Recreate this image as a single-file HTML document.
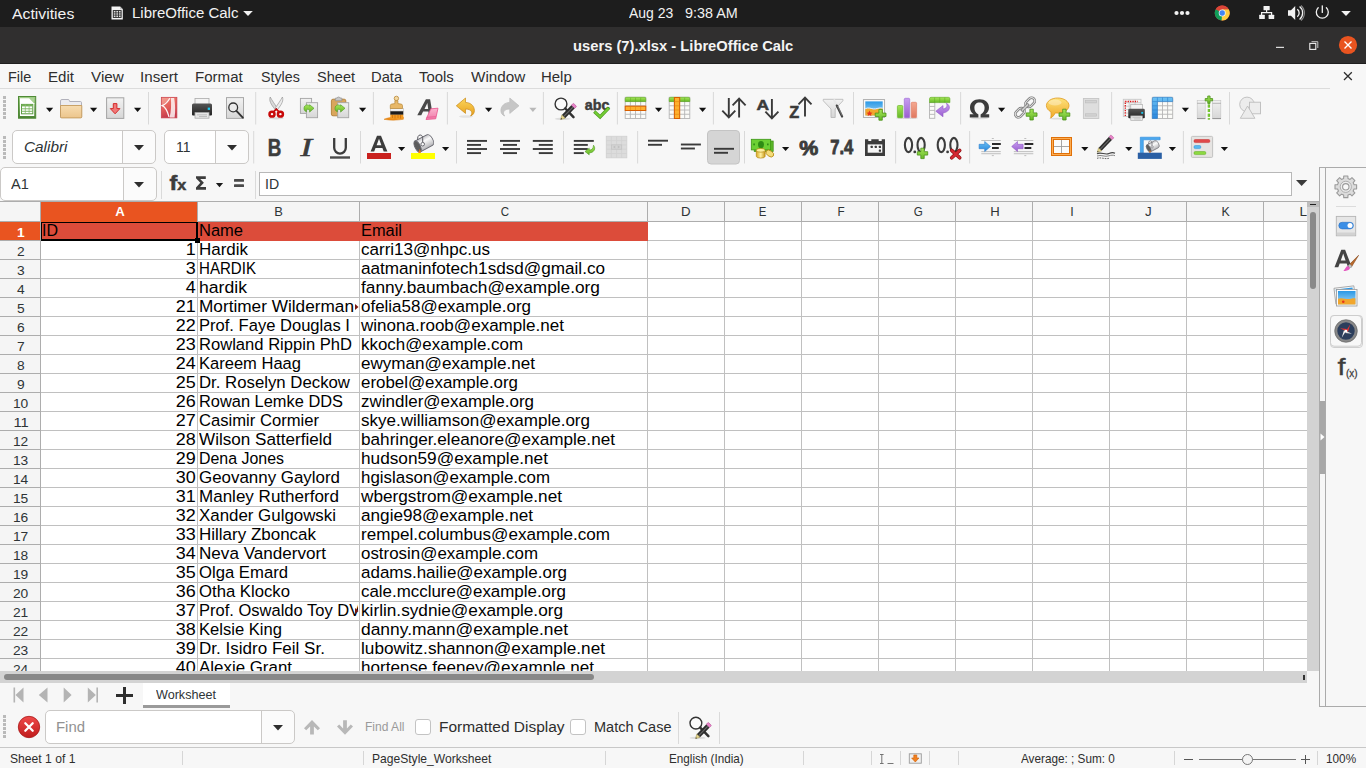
<!DOCTYPE html>
<html><head><meta charset="utf-8"><title>users (7).xlsx - LibreOffice Calc</title>
<style>
html,body{margin:0;padding:0}
body{width:1366px;height:768px;position:relative;overflow:hidden;background:#f7f7f7;font-family:"Liberation Sans",sans-serif;}
body>div,body>svg,body>span{position:absolute;}
.t{white-space:pre;display:block;position:absolute;}

</style></head><body>
<div style="left:0px;top:0px;width:1366px;height:27px;background:#1d1d1d;"></div>
<span class="t" style="left:12.00px;top:4.61px;font-size:15.20px;line-height:18.24px;color:#f2f2f2;transform:scaleX(1.0394);transform-origin:0 0;">Activities</span>
<span class="t" style="left:131.70px;top:4.90px;font-size:14.90px;line-height:17.88px;color:#f2f2f2;transform:scaleX(1.0071);transform-origin:0 0;">LibreOffice Calc</span>
<span class="t" style="left:629.20px;top:4.90px;font-size:14.90px;line-height:17.88px;color:#f2f2f2;transform:scaleX(0.9385);transform-origin:0 0;">Aug 23</span>
<span class="t" style="left:684.50px;top:4.90px;font-size:14.90px;line-height:17.88px;color:#f2f2f2;transform:scaleX(0.9645);transform-origin:0 0;">9:38 AM</span>
<div style="left:0px;top:27px;width:1366px;height:37px;background:#302f2f;"></div>
<div style="left:0px;top:63px;width:1366px;height:1px;background:#1f1f1f;"></div>
<span class="t" style="left:573.00px;top:37.62px;font-size:14.67px;line-height:17.6px;color:#f4f4f4;transform:scaleX(1.0054);transform-origin:0 0;font-weight:700;">users (7).xlsx - LibreOffice Calc</span>
<div style="left:0px;top:64px;width:1366px;height:704px;background:#f7f7f7;"></div>
<div style="left:0px;top:88px;width:1330px;height:1px;background:#dcdcdc;"></div>
<span class="t" style="left:8.40px;top:69.12px;font-size:14.67px;line-height:17.6px;color:#2e2e2e;transform:scaleX(0.9821);transform-origin:0 0;">File</span>
<span class="t" style="left:48.00px;top:69.12px;font-size:14.67px;line-height:17.6px;color:#2e2e2e;transform:scaleX(1.0291);transform-origin:0 0;">Edit</span>
<span class="t" style="left:91.00px;top:69.12px;font-size:14.67px;line-height:17.6px;color:#2e2e2e;transform:scaleX(1.0412);transform-origin:0 0;">View</span>
<span class="t" style="left:140.00px;top:69.12px;font-size:14.67px;line-height:17.6px;color:#2e2e2e;transform:scaleX(1.0341);transform-origin:0 0;">Insert</span>
<span class="t" style="left:195.00px;top:69.12px;font-size:14.67px;line-height:17.6px;color:#2e2e2e;transform:scaleX(1.0289);transform-origin:0 0;">Format</span>
<span class="t" style="left:261.00px;top:69.12px;font-size:14.67px;line-height:17.6px;color:#2e2e2e;transform:scaleX(0.9726);transform-origin:0 0;">Styles</span>
<span class="t" style="left:317.00px;top:69.12px;font-size:14.67px;line-height:17.6px;color:#2e2e2e;transform:scaleX(0.9923);transform-origin:0 0;">Sheet</span>
<span class="t" style="left:371.00px;top:69.12px;font-size:14.67px;line-height:17.6px;color:#2e2e2e;transform:scaleX(1.0055);transform-origin:0 0;">Data</span>
<span class="t" style="left:419.00px;top:69.12px;font-size:14.67px;line-height:17.6px;color:#2e2e2e;transform:scaleX(1.0174);transform-origin:0 0;">Tools</span>
<span class="t" style="left:471.00px;top:69.12px;font-size:14.67px;line-height:17.6px;color:#2e2e2e;transform:scaleX(1.0417);transform-origin:0 0;">Window</span>
<span class="t" style="left:541.00px;top:69.12px;font-size:14.67px;line-height:17.6px;color:#2e2e2e;transform:scaleX(1.0192);transform-origin:0 0;">Help</span>
<svg style="left:0;top:88px" width="1366" height="80" viewBox="0 88 1366 80"><defs>
<linearGradient id="gGreen" x1="0" y1="0" x2="0" y2="1"><stop offset="0" stop-color="#a6e65a"/><stop offset="1" stop-color="#66b826"/></linearGradient>
<linearGradient id="gDoc" x1="0" y1="0" x2="0" y2="1"><stop offset="0" stop-color="#a2cf88"/><stop offset="1" stop-color="#4a8232"/></linearGradient>
<linearGradient id="gFold" x1="0" y1="0" x2="0" y2="1"><stop offset="0" stop-color="#f7dcb0"/><stop offset="1" stop-color="#ecc58c"/></linearGradient>
<linearGradient id="gGrey" x1="0" y1="0" x2="0" y2="1"><stop offset="0" stop-color="#f2f2f2"/><stop offset="1" stop-color="#d6d6d6"/></linearGradient>
<linearGradient id="gPdf" x1="0" y1="0" x2="0.300" y2="1"><stop offset="0" stop-color="#f0806c"/><stop offset="0.600" stop-color="#e05a58"/><stop offset="1" stop-color="#c43a4c"/></linearGradient>
<linearGradient id="gPrn" x1="0" y1="0" x2="0" y2="1"><stop offset="0" stop-color="#555"/><stop offset="1" stop-color="#222"/></linearGradient>
<linearGradient id="gUndo" x1="0" y1="0" x2="0" y2="1"><stop offset="0" stop-color="#fbd65a"/><stop offset="1" stop-color="#e8a020"/></linearGradient>
<linearGradient id="gBub" x1="0" y1="0" x2="0" y2="1"><stop offset="0" stop-color="#fde27a"/><stop offset="1" stop-color="#f0a828"/></linearGradient>
<linearGradient id="gSky" x1="0" y1="0" x2="0" y2="1"><stop offset="0" stop-color="#2a98e6"/><stop offset="1" stop-color="#a8daf6"/></linearGradient>
<linearGradient id="gPurp" x1="0" y1="0" x2="0" y2="1"><stop offset="0" stop-color="#c79cf0"/><stop offset="1" stop-color="#9a5fd0"/></linearGradient>
<linearGradient id="gBlue" x1="0" y1="0" x2="0" y2="1"><stop offset="0" stop-color="#6cc2f4"/><stop offset="1" stop-color="#2a86dc"/></linearGradient>
<linearGradient id="gSalm" x1="0" y1="0" x2="0" y2="1"><stop offset="0" stop-color="#f4a890"/><stop offset="1" stop-color="#e07860"/></linearGradient>
<linearGradient id="gGold" x1="0" y1="0" x2="1" y2="0"><stop offset="0" stop-color="#d8a820"/><stop offset="0.5" stop-color="#fff0a0"/><stop offset="1" stop-color="#c89818"/></linearGradient>
<linearGradient id="gPink" x1="0" y1="0" x2="0" y2="1"><stop offset="0" stop-color="#fbb4cf"/><stop offset="1" stop-color="#f07aa8"/></linearGradient>
<linearGradient id="gBucket" x1="0" y1="0" x2="0" y2="1"><stop offset="0" stop-color="#c4c4c8"/><stop offset="0.350" stop-color="#fbfbfb"/><stop offset="1" stop-color="#b4b4b8"/></linearGradient>
</defs><rect x="18.500" y="96.500" width="17.200" height="21.700" fill="url(#gDoc)" stroke="#4f8a36" stroke-width="1"/><path d="M20 98.300h9.300l4.900 4.900v12.900H20z" fill="#fff"/><path d="M29.300 98.300l4.900 4.900v-4.900z" fill="#b4d8a0" opacity="0.700"/><rect x="21.500" y="104.400" width="11.300" height="9.400" fill="#fff" stroke="#5c9c42" stroke-width="1"/><rect x="21.500" y="104.400" width="11.300" height="2" fill="#74b058"/><path d="M25.300 104.400v9.400M29.100 104.400v9.400" stroke="#8cc070" stroke-width="0.800"/><path d="M21.500 108.800h11.300M21.500 111.300h11.300" stroke="#74b058" stroke-width="0.900"/><path d="M46 107.8h7.2l-3.6 4.1z" fill="#111"/><path d="M60.5 117.5v-16.6q0-1.4 1.4-1.4h6.2q1 0 1.3 1l0.3 1h10.6q1.2 0 1.2 1.2v14.8z" fill="#ececf0" stroke="#a9a9b4" stroke-width="0.9"/><path d="M60.5 105.5h21.3v11.2q0 1.2-1.2 1.2h-18.9q-1.2 0-1.2-1.2z" fill="url(#gFold)" stroke="#c49a5c" stroke-width="0.9"/><path d="M90 107.8h7.2l-3.6 4.1z" fill="#111"/><rect x="106.6" y="97.8" width="17.2" height="20.6" fill="url(#gGrey)" stroke="#a4a4a4" stroke-width="1"/><path d="M113.3 103.6h3.6v5h3l-4.8 5.2l-4.8-5.2h3z" fill="#f07878" stroke="#d42a2a" stroke-width="1"/><path d="M134 107.8h7.2l-3.6 4.1z" fill="#111"/><rect x="148.0" y="92" width="1" height="32.5" fill="#d9d9d9"/><rect x="161.300" y="97.300" width="15.600" height="20.600" fill="url(#gPdf)" stroke="#c8404c" stroke-width="0.700"/><path d="M169.800 98.300c-2.300 4.300-5.300 6.400-7.600 7.300c3 1.300 5.200 5 6.800 11.300" fill="none" stroke="#fff" stroke-width="1.300" opacity="0.950"/><path d="M170.800 98c0.600 6 0.400 13.300-1.200 19.400h5c1-6 0.600-13.300-0.400-19.400z" fill="#fff" opacity="0.800"/><path d="M162 98h7.500c-2 3.800-4.700 6-7.500 7.200z" fill="#fff" opacity="0.220"/><g transform="translate(192,98) scale(1.0,1.0)"><rect x="3" y="0.4" width="14" height="7" fill="#f4f4f4" stroke="#aaa" stroke-width="0.8"/><path d="M1.5 5.6h17a1.5 1.5 0 0 1 1.5 1.5v9.4a1 1 0 0 1 -1 1h-18a1 1 0 0 1 -1 -1v-9.4a1.5 1.5 0 0 1 1.5 -1.5z" fill="url(#gPrn)"/><rect x="3" y="14.6" width="14" height="5.6" fill="#e6e6e6" stroke="#aaa" stroke-width="0.8"/><rect x="5" y="16.4" width="10" height="0.9" fill="#b8b8b8"/><rect x="7" y="18" width="8" height="0.9" fill="#b8b8b8"/><rect x="15.7" y="9.6" width="2.3" height="2.3" fill="#18c8f0"/></g><rect x="226.5" y="97.6" width="17" height="20.8" fill="url(#gGrey)" stroke="#a8a8a8" stroke-width="1"/><circle cx="233.2" cy="107.4" r="4.4" fill="#ececec" fill-opacity="0.8" stroke="#333" stroke-width="1.3"/><path d="M236.4 110.8l6.4 6.8" stroke="#333" stroke-width="1.9" stroke-linecap="round"/><rect x="255.2" y="92" width="1" height="32.5" fill="#d9d9d9"/><ellipse cx="276.200" cy="118.300" rx="7.500" ry="1.100" fill="#000" opacity="0.120"/><path d="M270.200 97c-1.300 3.400 0.300 7 5.300 13l1.700-2.200c-2.500-3.600-5.300-7.600-7-10.800z" fill="#d8d8d8" stroke="#8c8c8c" stroke-width="0.600"/><path d="M282.400 97c1.300 3.400-0.300 7-5.300 13l-1.700-2.200c2.500-3.600 5.300-7.600 7-10.800z" fill="#ececec" stroke="#8c8c8c" stroke-width="0.600"/><circle cx="276.300" cy="108.600" r="0.700" fill="#555"/><ellipse cx="272" cy="114.200" rx="2.500" ry="2.400" fill="none" stroke="#c80808" stroke-width="2.500"/><ellipse cx="280.400" cy="114.200" rx="2.500" ry="2.400" fill="none" stroke="#c80808" stroke-width="2.500"/><path d="M273.800 111.600l2.500-2.400l2.500 2.400" fill="none" stroke="#c80808" stroke-width="1.800"/><rect x="300.400" y="98.400" width="11.200" height="15" fill="url(#gGrey)" stroke="#a4a4a4" stroke-width="0.9"/><rect x="306.400" y="102.700" width="11.200" height="15" fill="url(#gGrey)" stroke="#a4a4a4" stroke-width="0.9"/><path d="M304.0 108.2c0.3-3.6 4-4.2 5.600-2.100v-1.400l4.400 3.600l-4.400 3.800v-1.900c-1.600-1.400-3.600-1.300-3.200 1.600c-1.500-0.600-2.500-2-2.400-3.600z" fill="url(#gGreen)" stroke="#4a9a1c" stroke-width="0.600"/><rect x="331.400" y="99.200" width="14.400" height="16.600" rx="1.600" fill="#d9a65c" stroke="#b07e38" stroke-width="0.9"/><path d="M335.300 100.800v-2.200q0-0.600 0.600-0.600h1.300q0.300-1 1.400-1t1.400 1h1.300q0.600 0 0.600 0.600v2.200z" fill="#c8c8c8" stroke="#8c8c8c" stroke-width="0.700"/><rect x="337.700" y="102.700" width="11" height="15" fill="url(#gGrey)" stroke="#a4a4a4" stroke-width="0.9"/><path d="M335.0 108.2c0.3-3.6 4-4.2 5.600-2.100v-1.400l4.400 3.600l-4.400 3.800v-1.900c-1.600-1.400-3.600-1.300-3.200 1.600c-1.500-0.600-2.500-2-2.400-3.600z" fill="url(#gGreen)" stroke="#4a9a1c" stroke-width="0.600"/><path d="M359 107.8h7.2l-3.6 4.1z" fill="#111"/><rect x="372.9" y="92" width="1" height="32.5" fill="#d9d9d9"/><path d="M384 119.300c4-1.800 7-1.500 8-2.300h11.300v2.300c-6 1-13 1.200-19.300 0z" fill="#f0901c" stroke="#d87808" stroke-width="0.500"/><rect x="390.300" y="114.300" width="13" height="4.500" fill="#f29a22"/><path d="M392.500 115v3M395 115v3.500M398 115v3M400.500 115v3.500" stroke="#c86c08" stroke-width="0.700"/><rect x="390.300" y="111" width="13" height="3.600" fill="#1c1c1c"/><rect x="390.300" y="108.400" width="13" height="2.700" fill="#f4f4f4" stroke="#999" stroke-width="0.400"/><path d="M390.300 108.500v-2.800q0-1.400 1.400-1.600l3.200-0.500v-3h3v3l3.200 0.500q1.400 0.200 1.400 1.600v2.800z" fill="#e8b868" stroke="#b88838" stroke-width="0.700"/><circle cx="396.400" cy="98.400" r="2.200" fill="#f4d8a0" stroke="#b88838" stroke-width="0.800"/><path d="M417.300 115.200l8.600-16h4.200l2.700 16h-3.900l-0.500-3.600h-5.300l-1.800 3.600zm7.200-6.300h3.700l-0.800-5.800z" fill="#4a4a4a"/><path d="M430.800 108.800l7.200-0.600l-2.300 10.600l-9.700 0.700z" fill="url(#gPink)" stroke="#e8508c" stroke-width="0.800"/><path d="M426.400 117.300l9.400-0.600" stroke="#e8508c" stroke-width="0.700"/><rect x="446.9" y="92" width="1" height="32.5" fill="#d9d9d9"/><ellipse cx="466" cy="116.500" rx="7" ry="1.300" fill="#000" opacity="0.080"/><path transform="translate(456,98)" d="M0.300 7.800L9.500 0v4.400c5 0.200 8.700 3.200 8.900 8c0.100 2.600-1.400 4.600-3.800 5.600c1.200-1.500 1.600-3.200 0.700-4.700c-1-1.600-3-2.300-5.800-2.200v4.300z" fill="url(#gUndo)" stroke="#c88a18" stroke-width="0.700" stroke-linejoin="round"/><path d="M485 107.8h7.2l-3.6 4.1z" fill="#111"/><path transform="translate(519.3,98) scale(-1,1)" d="M0.300 7.800L9.500 0v4.400c5 0.200 8.700 3.200 8.900 8c0.100 2.600-1.400 4.600-3.800 5.600c1.200-1.500 1.600-3.200 0.700-4.700c-1-1.600-3-2.300-5.800-2.200v4.300z" fill="#c6c6c6" stroke="#bcbcbc" stroke-width="0.700" stroke-linejoin="round"/><path d="M529.3 107.8h7.2l-3.6 4.1z" fill="#b9b9b9"/><rect x="542.9" y="92" width="1" height="32.5" fill="#d9d9d9"/><g transform="translate(553.7,97.5)"><ellipse cx="9" cy="21.300" rx="8" ry="1.300" fill="#000" opacity="0.100"/><circle cx="7.300" cy="6.500" r="5.900" fill="#fdfdfd" fill-opacity="0.600" stroke="#333" stroke-width="1.400"/><path d="M11.600 11l8.200 8.600" stroke="#333" stroke-width="2.500" stroke-linecap="round"/><g transform="translate(21.3,7.3) rotate(134.21)"><rect x="0" y="-2.3" width="3" height="4.6" rx="0.8" fill="#e884c8" stroke="#b04890" stroke-width="0.5"/><rect x="3" y="-2.3" width="13.51" height="4.6" fill="#2c2c2c"/><rect x="3" y="-0.69" width="13.51" height="1.15" fill="#666"/><path d="M16.51 -2.3L20.51 0L16.51 2.3z" fill="#e8d890" stroke="#8a7a30" stroke-width="0.4"/><path d="M19.21 -0.76L20.51 0L19.21 0.76z" fill="#222"/></g></g><text x="584.800" y="110" font-family="Liberation Sans, sans-serif" font-weight="700" font-size="14.500" textLength="24.500" lengthAdjust="spacingAndGlyphs" fill="#3c3c3c" stroke="#3c3c3c" stroke-width="0.500">abc</text><path d="M595.500 112.600l4.600 4.300l7.800-8" fill="none" stroke="#4a9a1c" stroke-width="3.300" stroke-linecap="square"/><path d="M595.500 112.600l4.600 4.300l7.800-8" fill="none" stroke="#74cc34" stroke-width="2.100" stroke-linecap="square"/><rect x="616.9" y="92" width="1" height="32.5" fill="#d9d9d9"/><rect x="625.2" y="97.3" width="20.59999999999991" height="21.200000000000003" fill="#fbfbf8" stroke="#b4b4b4" stroke-width="0.9"/><path d="M630.35 97.3V118.5" stroke="#b4b4b4" stroke-width="0.9"/><path d="M635.50 97.3V118.5" stroke="#b4b4b4" stroke-width="0.9"/><path d="M640.65 97.3V118.5" stroke="#b4b4b4" stroke-width="0.9"/><path d="M625.2 101.54H645.8" stroke="#b4b4b4" stroke-width="0.9"/><path d="M625.2 105.78H645.8" stroke="#b4b4b4" stroke-width="0.9"/><path d="M625.2 110.02H645.8" stroke="#b4b4b4" stroke-width="0.9"/><path d="M625.2 114.26H645.8" stroke="#b4b4b4" stroke-width="0.9"/><path d="M625.2 101.54v-2.74q0-1.500 1.500-1.500h17.59999999999991q1.500 0 1.500 1.500v2.74z" fill="url(#gGreen)" stroke="#5aa81e" stroke-width="0.600"/><path d="M630.35 97.8v3.74" stroke="#5aa81e" stroke-width="0.700" opacity="0.700"/><path d="M635.50 97.8v3.74" stroke="#5aa81e" stroke-width="0.700" opacity="0.700"/><path d="M640.65 97.8v3.74" stroke="#5aa81e" stroke-width="0.700" opacity="0.700"/><rect x="625.200" y="106.200" width="20.600" height="4.300" fill="#ffb02e" stroke="#d85e00" stroke-width="1"/><path d="M630.350 106.500v3.700M635.500 106.500v3.700M640.650 106.500v3.700" stroke="#e88a10" stroke-width="0.700"/><path d="M655 107.8h7.2l-3.6 4.1z" fill="#111"/><rect x="669.2" y="97.3" width="20.59999999999991" height="21.200000000000003" fill="#fbfbf8" stroke="#b4b4b4" stroke-width="0.9"/><path d="M674.35 97.3V118.5" stroke="#b4b4b4" stroke-width="0.9"/><path d="M679.50 97.3V118.5" stroke="#b4b4b4" stroke-width="0.9"/><path d="M684.65 97.3V118.5" stroke="#b4b4b4" stroke-width="0.9"/><path d="M669.2 101.54H689.8" stroke="#b4b4b4" stroke-width="0.9"/><path d="M669.2 105.78H689.8" stroke="#b4b4b4" stroke-width="0.9"/><path d="M669.2 110.02H689.8" stroke="#b4b4b4" stroke-width="0.9"/><path d="M669.2 114.26H689.8" stroke="#b4b4b4" stroke-width="0.9"/><path d="M669.2 101.54v-2.74q0-1.500 1.500-1.500h17.59999999999991q1.500 0 1.500 1.500v2.74z" fill="url(#gGreen)" stroke="#5aa81e" stroke-width="0.600"/><path d="M674.35 97.8v3.74" stroke="#5aa81e" stroke-width="0.700" opacity="0.700"/><path d="M679.50 97.8v3.74" stroke="#5aa81e" stroke-width="0.700" opacity="0.700"/><path d="M684.65 97.8v3.74" stroke="#5aa81e" stroke-width="0.700" opacity="0.700"/><rect x="674.400" y="97.500" width="5.300" height="21" fill="#ffb02e" stroke="#d85e00" stroke-width="1"/><path d="M674.700 101.600h4.700M674.700 105.800h4.700M674.700 110h4.700M674.700 114.300h4.700" stroke="#e88a10" stroke-width="0.700"/><path d="M699 107.8h7.2l-3.6 4.1z" fill="#111"/><rect x="712.9" y="92" width="1" height="32.5" fill="#d9d9d9"/><path d="M728.800 98v19M722.300 110.700l6.500 6.600l6.500-6.600M739.100 117.500v-19M732.600 105.300l6.500-6.600l6.500 6.600" stroke="#3a3a3a" stroke-width="1.900" fill="none" stroke-linecap="butt"/><path d="M771.900 99v19M765.400 111.700l6.500 6.600l6.500-6.600" stroke="#3a3a3a" stroke-width="1.900" fill="none" stroke-linecap="butt"/><text x="756.600" y="109.500" font-family="Liberation Sans, sans-serif" font-weight="700" font-size="15" textLength="12.600" lengthAdjust="spacingAndGlyphs" fill="#3a3a3a" stroke="#3a3a3a" stroke-width="0.500">A</text><path d="M805 116.500v-19M798.500 104.300l6.500-6.600l6.500 6.600" stroke="#3a3a3a" stroke-width="1.900" fill="none" stroke-linecap="butt"/><text x="789.300" y="117.700" font-family="Liberation Sans, sans-serif" font-weight="700" font-size="15.600" textLength="10" lengthAdjust="spacingAndGlyphs" fill="#3a3a3a" stroke="#3a3a3a" stroke-width="0.500">Z</text><path d="M823.300 99.300h19.600v1.500l-7.700 8.200v8.500h-4.200v-8.500l-7.700-8.200z" fill="url(#gGrey)" stroke="#b4b4b4" stroke-width="0.800"/><path d="M833.800 99.500l3.400 6.800" stroke="#e8e8e8" stroke-width="2.200"/><path d="M836.800 105.600l5.300 11" stroke="#444" stroke-width="2.200" stroke-linecap="round"/><path d="M837.600 106l4.600 9.600" stroke="#999" stroke-width="0.600"/><rect x="853.0" y="92" width="1" height="32.5" fill="#d9d9d9"/><rect x="863.400" y="99.600" width="21.200" height="17.800" fill="#fafafa" stroke="#a8a8a8" stroke-width="0.900"/><rect x="865.300" y="101.400" width="17.400" height="14.200" fill="url(#gSky)"/><path d="M865.300 109c3-1.500 5-0.300 8 0.200s6-1.800 9.400-0.700v7.100h-17.400z" fill="#f2a62c"/><path d="M865.300 108.700c3-1.500 5-0.300 8 0.200s6-1.800 9.400-0.700" stroke="#fff" stroke-width="0.900" fill="none" opacity="0.900"/><path d="M869.500 110.500l1 1.900l2 0.300l-1.500 1.400l0.400 2l-1.900-1l-1.800 1l0.300-2l-1.400-1.400l2-0.300z" fill="#e8341c"/><path d="M878.9 109.39999999999999h3.4v3.7h3.7v3.4h-3.7v3.7h-3.4v-3.7h-3.7v-3.4h3.7z" fill="url(#gGreen)" stroke="#4a9018" stroke-width="0.8"/><ellipse cx="907" cy="118" rx="11" ry="1" fill="#000" opacity="0.120"/><rect x="897.400" y="105.500" width="5.400" height="12.200" rx="1" fill="url(#gGreen)" stroke="#6cb82c" stroke-width="0.700"/><rect x="904.300" y="98.300" width="5.400" height="19.400" rx="1" fill="url(#gPurp)" stroke="#a070d8" stroke-width="0.700"/><rect x="911.200" y="102.300" width="5.400" height="15.400" rx="1" fill="url(#gSalm)" stroke="#e08068" stroke-width="0.700"/><rect x="929.5" y="102.5" width="5.2999999999999545" height="15.799999999999997" fill="#fbfbf8" stroke="#b4b4b4" stroke-width="0.9"/><path d="M929.5 106.45H934.8" stroke="#b4b4b4" stroke-width="0.9"/><path d="M929.5 110.40H934.8" stroke="#b4b4b4" stroke-width="0.9"/><path d="M929.5 114.35H934.8" stroke="#b4b4b4" stroke-width="0.9"/><path d="M929.500 102.600v-3.800q0-1.500 1.500-1.500h17.400q1.500 0 1.500 1.500v3.800z" fill="url(#gGreen)" stroke="#5aa81e" stroke-width="0.600"/><path d="M934.600 97.500v5M939.700 97.500v5M944.800 97.500v5" stroke="#5aa81e" stroke-width="0.700" opacity="0.700"/><path d="M946.300 103.300c4.800 2 4.300 8.600-3.300 9.700v3.800l-7.200-5.600l7.200-5.600v3.400c3.300-0.400 5-2.600 3.300-5.700z" fill="url(#gPurp)" stroke="#9058c8" stroke-width="0.600"/><rect x="960.1" y="92" width="1" height="32.5" fill="#d9d9d9"/><ellipse cx="979.500" cy="118.300" rx="9" ry="0.900" fill="#000" opacity="0.100"/><path d="M969.800 117.600v-3.300h3.900c-2.500-1.700-3.700-4-3.700-6.800c0-5 3.800-8.200 9.500-8.200s9.500 3.200 9.500 8.200c0 2.800-1.200 5.100-3.700 6.800h3.900v3.300h-8.600v-3.100c2.600-1.200 4-3.600 4-6.700c0-3.400-1.900-5.400-5.100-5.400s-5.100 2-5.100 5.400c0 3.100 1.400 5.500 4 6.700v3.100z" fill="#3c3c3c"/><path d="M998 107.8h7.2l-3.6 4.1z" fill="#111"/><g transform="translate(1025,107.500) rotate(-45)"><rect x="-12.500" y="-3.200" width="10.500" height="6.400" rx="3.200" fill="none" stroke="#6e6e6e" stroke-width="2.600"/><rect x="-12.500" y="-3.200" width="10.500" height="6.400" rx="3.200" fill="none" stroke="#dcdcdc" stroke-width="1.200"/><rect x="2" y="-3.200" width="10.500" height="6.400" rx="3.200" fill="none" stroke="#6e6e6e" stroke-width="2.600"/><rect x="2" y="-3.200" width="10.500" height="6.400" rx="3.200" fill="none" stroke="#dcdcdc" stroke-width="1.200"/><rect x="-5" y="-1.300" width="10" height="2.600" rx="1.300" fill="#c8c8c8" stroke="#6e6e6e" stroke-width="0.800"/></g><path d="M1029.8999999999999 109.19999999999999h3.4v3.7h3.7v3.4h-3.7v3.7h-3.4v-3.7h-3.7v-3.4h3.7z" fill="url(#gGreen)" stroke="#4a9018" stroke-width="0.8"/><ellipse cx="1057" cy="118.600" rx="8" ry="0.900" fill="#000" opacity="0.100"/><path d="M1057.700 98c6.300 0 11.300 3.400 11.300 7.600s-5 7.500-11.300 7.500c-0.800 0-1.600-0.100-2.400-0.200c-1 2-2.600 4-4.600 5.200c0.500-2 0.600-4.200 0.200-6.300c-2.800-1.400-4.500-3.700-4.500-6.200c0-4.200 5-7.600 11.300-7.600z" fill="url(#gBub)" stroke="#e09a20" stroke-width="0.800"/><ellipse cx="1055" cy="102.500" rx="6.500" ry="3" fill="#fff" opacity="0.350"/><path d="M1062.7 109.19999999999999h3.4v3.7h3.7v3.4h-3.7v3.7h-3.4v-3.7h-3.7v-3.4h3.7z" fill="url(#gGreen)" stroke="#4a9018" stroke-width="0.8"/><rect x="1083.400" y="98.500" width="15.400" height="20" fill="#dedede" stroke="#c6c6c6" stroke-width="0.900"/><rect x="1085.600" y="100.600" width="11" height="2.300" fill="#d2d2d2" stroke="#bcbcbc" stroke-width="0.600"/><rect x="1085.600" y="113.800" width="11" height="2.300" fill="#d2d2d2" stroke="#bcbcbc" stroke-width="0.600"/><rect x="1111.1" y="92" width="1" height="32.5" fill="#d9d9d9"/><rect x="1123.3" y="99.3" width="17.700000000000045" height="17.200000000000003" fill="#f6f6f6" stroke="#c8c8c8" stroke-width="0.9"/><path d="M1129.20 99.3V116.5" stroke="#c8c8c8" stroke-width="0.9"/><path d="M1135.10 99.3V116.5" stroke="#c8c8c8" stroke-width="0.9"/><path d="M1123.3 102.74H1141" stroke="#c8c8c8" stroke-width="0.9"/><path d="M1123.3 106.18H1141" stroke="#c8c8c8" stroke-width="0.9"/><path d="M1123.3 109.62H1141" stroke="#c8c8c8" stroke-width="0.9"/><path d="M1123.3 113.06H1141" stroke="#c8c8c8" stroke-width="0.9"/><path d="M1125.300 116v-14.500h12.500" fill="none" stroke="#e01818" stroke-width="1.300" stroke-dasharray="1.300 1.100"/><g transform="translate(1128.3,104.3) scale(0.825,0.7951219512195122)"><rect x="3" y="0.4" width="14" height="7" fill="#f4f4f4" stroke="#aaa" stroke-width="0.8"/><path d="M1.5 5.6h17a1.5 1.5 0 0 1 1.5 1.5v9.4a1 1 0 0 1 -1 1h-18a1 1 0 0 1 -1 -1v-9.4a1.5 1.5 0 0 1 1.5 -1.5z" fill="url(#gPrn)"/><rect x="3" y="14.6" width="14" height="5.6" fill="#e6e6e6" stroke="#aaa" stroke-width="0.8"/><rect x="5" y="16.4" width="10" height="0.9" fill="#b8b8b8"/><rect x="7" y="18" width="8" height="0.9" fill="#b8b8b8"/><rect x="15.7" y="9.6" width="2.3" height="2.3" fill="#18c8f0"/></g><rect x="1152.3" y="97.3" width="20.40000000000009" height="21.200000000000003" fill="#fbfbf8" stroke="#b4b4b4" stroke-width="0.9"/><path d="M1157.40 97.3V118.5" stroke="#b4b4b4" stroke-width="0.9"/><path d="M1162.50 97.3V118.5" stroke="#b4b4b4" stroke-width="0.9"/><path d="M1167.60 97.3V118.5" stroke="#b4b4b4" stroke-width="0.9"/><path d="M1152.3 101.54H1172.7" stroke="#b4b4b4" stroke-width="0.9"/><path d="M1152.3 105.78H1172.7" stroke="#b4b4b4" stroke-width="0.9"/><path d="M1152.3 110.02H1172.7" stroke="#b4b4b4" stroke-width="0.9"/><path d="M1152.3 114.26H1172.7" stroke="#b4b4b4" stroke-width="0.9"/><path d="M1152.300 118.500v-19.700q0-1.500 1.500-1.500h17.400q1.500 0 1.500 1.500v2.800h-15.300v16.900z" fill="url(#gBlue)" stroke="#2a7ccc" stroke-width="0.600"/><path d="M1157.400 97.500v4M1162.500 97.500v4M1167.600 97.500v4M1152.500 101.600h5M1152.500 105.800h5M1152.500 110h5M1152.500 114.300h5" stroke="#2a7ccc" stroke-width="0.700" opacity="0.800"/><path d="M1181.8 107.8h7.2l-3.6 4.1z" fill="#111"/><rect x="1197.200" y="100.500" width="8" height="18" fill="url(#gGrey)" stroke="#c4c4c4" stroke-width="0.600"/><rect x="1212.600" y="100.500" width="8.200" height="18" fill="url(#gGrey)" stroke="#c4c4c4" stroke-width="0.600"/><path d="M1197 103.300h8.400M1212.400 103.300h8.600" stroke="#b0b0b0" stroke-width="0.900"/><path d="M1197 118.600h8.400M1212.400 118.600h8.600" stroke="#8a8a8a" stroke-width="0.900"/><path d="M1208.900 104.500v15" stroke="#5aa81e" stroke-width="2.300" stroke-dasharray="3 1.600"/><path d="M1208.900 104.500v15" stroke="#86d83a" stroke-width="1.200" stroke-dasharray="3 1.600"/><path d="M1207.75 96.0h2.3v2.5500000000000003h2.5500000000000003v2.3h-2.5500000000000003v2.5500000000000003h-2.3v-2.5500000000000003h-2.5500000000000003v-2.3h2.5500000000000003z" fill="url(#gGreen)" stroke="#4a9018" stroke-width="0.8"/><rect x="1229.0" y="92" width="1" height="32.5" fill="#d9d9d9"/><circle cx="1247" cy="104.400" r="7.300" fill="#ececec" stroke="#bcbcbc" stroke-width="0.900"/><rect x="1249.500" y="102.200" width="11" height="11.600" fill="#ededed" stroke="#bcbcbc" stroke-width="0.900"/><path d="M1240.300 118.300l7.300-12.300l7.300 12.300z" fill="#ececec" stroke="#bcbcbc" stroke-width="0.900"/><rect x="253.2" y="131" width="1" height="32.5" fill="#d9d9d9"/><text x="267.800" y="155.800" font-family="Liberation Sans, sans-serif" font-weight="700" font-size="23" textLength="13.600" lengthAdjust="spacingAndGlyphs" fill="#3c3c3c" stroke="#3c3c3c" stroke-width="0.500">B</text><text x="300.500" y="155.800" font-family="Liberation Serif, serif" font-style="italic" font-weight="400" font-size="24.500" textLength="11.500" stroke="#3c3c3c" stroke-width="0.600" lengthAdjust="spacingAndGlyphs" fill="#3c3c3c">I</text><path d="M334.200 138v9.800a5.800 5.800 0 0 0 11.600 0v-9.800" fill="none" stroke="#3c3c3c" stroke-width="2.300"/><rect x="330" y="156.300" width="20" height="2.400" fill="#4a4a4a"/><rect x="360.0" y="131" width="1" height="32.5" fill="#d9d9d9"/><path d="M370.600 151.600l6.400-15.800h4l6.400 15.800h-3.700l-1.300-3.500h-6.900l-1.300 3.500zm6-6.300h4.800l-2.400-6.500z" fill="#3c3c3c"/><rect x="367" y="153" width="24" height="6" fill="#c9211e"/><path d="M398 147h7.2l-3.6 4.1z" fill="#111"/><g transform="translate(423.6,143.3) scale(1.0)"><g transform="rotate(-28)"><path d="M-6.800 -6H6.800A3.200 6 0 0 1 6.800 6H-6.800z" fill="url(#gBucket)" stroke="#66666e" stroke-width="0.900"/><ellipse cx="-6.800" cy="0" rx="2.700" ry="6" fill="#5c5c5c" stroke="#66666e" stroke-width="0.900"/></g><path d="M-5.900 -3.200C-6.200 -6 -5.500 -8.300 -3.400 -8.300C-1.400 -8.300 -0.900 -6.500 -0.900 -4.500V-1" fill="none" stroke="#5a5a62" stroke-width="1"/><circle cx="-0.900" cy="0.900" r="1.800" fill="#fafafa" stroke="#5a5a62" stroke-width="0.900"/><path d="M-5.400 9.800c0.300-2 1.400-2.600 1.300-4.200c1.100 1.300 1.600 2.800 1 4.200z" fill="#f07818"/></g><rect x="411" y="153" width="24" height="6" fill="#ffff00"/><path d="M442 147h7.2l-3.6 4.1z" fill="#111"/><rect x="456.0" y="131" width="1" height="32.5" fill="#d9d9d9"/><rect x="467.00" y="139.95" width="20" height="1.9" fill="#3a3a3a"/><rect x="467.00" y="143.95" width="14" height="1.9" fill="#3a3a3a"/><rect x="467.00" y="148.05" width="20" height="1.9" fill="#3a3a3a"/><rect x="467.00" y="152.15" width="14" height="1.9" fill="#3a3a3a"/><rect x="500.00" y="139.95" width="20" height="1.9" fill="#3a3a3a"/><rect x="503.00" y="143.95" width="14" height="1.9" fill="#3a3a3a"/><rect x="500.00" y="148.05" width="20" height="1.9" fill="#3a3a3a"/><rect x="503.00" y="152.15" width="14" height="1.9" fill="#3a3a3a"/><rect x="532.80" y="139.95" width="20" height="1.9" fill="#3a3a3a"/><rect x="538.80" y="143.95" width="14" height="1.9" fill="#3a3a3a"/><rect x="532.80" y="148.05" width="20" height="1.9" fill="#3a3a3a"/><rect x="538.80" y="152.15" width="14" height="1.9" fill="#3a3a3a"/><rect x="563.0" y="131" width="1" height="32.5" fill="#d9d9d9"/><rect x="573.80" y="139.95" width="20" height="1.9" fill="#3a3a3a"/><rect x="573.80" y="143.95" width="14" height="1.9" fill="#3a3a3a"/><rect x="573.80" y="148.05" width="14" height="1.9" fill="#3a3a3a"/><rect x="573.80" y="152.15" width="10" height="1.9" fill="#3a3a3a"/><path d="M593.500 145.200c2.800 3.400 0.500 7.600-4.300 7.600v2l-4.200-3.300l4.200-3.300v1.900c2.600 0.200 4.300-1.800 4.300-4.900z" fill="url(#gGreen)" stroke="#4a9a1c" stroke-width="0.600"/><rect x="606.3" y="136.3" width="20.5" height="21.5" fill="#dcdcdc" stroke="#d2d2d2" stroke-width="0.9"/><path d="M611.42 136.3V157.8" stroke="#d2d2d2" stroke-width="0.9"/><path d="M616.55 136.3V157.8" stroke="#d2d2d2" stroke-width="0.9"/><path d="M621.67 136.3V157.8" stroke="#d2d2d2" stroke-width="0.9"/><path d="M606.3 140.60H626.8" stroke="#d2d2d2" stroke-width="0.9"/><path d="M606.3 144.90H626.8" stroke="#d2d2d2" stroke-width="0.9"/><path d="M606.3 149.20H626.8" stroke="#d2d2d2" stroke-width="0.9"/><path d="M606.3 153.50H626.8" stroke="#d2d2d2" stroke-width="0.9"/><rect x="611.400" y="144.900" width="10.300" height="4.300" fill="#d4d4d4" stroke="#c2c2c2" stroke-width="0.700"/><path d="M615.300 145.600l-2.400 1.500l2.400 1.500zM617.800 145.600l2.400 1.500l-2.400 1.500z" fill="#c0c0c0"/><rect x="637.1" y="131" width="1" height="32.5" fill="#d9d9d9"/><rect x="648.00" y="139.75" width="20" height="1.9" fill="#3a3a3a"/><rect x="648.00" y="143.85" width="14" height="1.9" fill="#3a3a3a"/><rect x="680.90" y="143.55" width="20" height="1.9" fill="#3a3a3a"/><rect x="680.90" y="147.55" width="14" height="1.9" fill="#3a3a3a"/><rect x="707.500" y="130.500" width="32" height="33.500" rx="3.500" fill="#d5d5d5" stroke="#c4c4c4" stroke-width="1"/><rect x="714.00" y="147.85" width="20" height="1.9" fill="#3a3a3a"/><rect x="714.00" y="151.85" width="14" height="1.9" fill="#3a3a3a"/><rect x="744.0" y="131" width="1" height="32.5" fill="#d9d9d9"/><rect x="754.200" y="141" width="19" height="10.600" fill="#5cb82a" stroke="#3c8c14" stroke-width="0.700"/><rect x="751.300" y="139.300" width="19.400" height="10.600" fill="#6cd034" stroke="#3c9414" stroke-width="0.800"/><ellipse cx="761" cy="144.600" rx="3" ry="3.600" fill="#2e8c14"/><rect x="753.300" y="143.500" width="1.600" height="1.800" fill="#2e8c14"/><rect x="767" y="143.500" width="1.600" height="1.800" fill="#2e8c14"/><ellipse cx="769.800" cy="153.500" rx="4.300" ry="2.800" transform="rotate(35 769.800 153.500)" fill="#f4dc78" stroke="#b88a14" stroke-width="0.800"/><path d="M756.300 150.300v6a4.400 1.800 0 0 0 8.800 0v-6z" fill="url(#gGold)" stroke="#b88a14" stroke-width="0.700"/><ellipse cx="760.700" cy="150.300" rx="4.400" ry="1.900" fill="#fbeea0" stroke="#b88a14" stroke-width="0.700"/><path d="M782 147h7.2l-3.6 4.1z" fill="#111"/><text x="799.300" y="154.600" font-family="Liberation Sans, sans-serif" font-weight="700" font-size="20.500" textLength="19" lengthAdjust="spacingAndGlyphs" fill="#3c3c3c" stroke="#3c3c3c" stroke-width="0.900">%</text><text x="830.300" y="154" font-family="Liberation Sans, sans-serif" font-weight="700" font-size="19.500" textLength="23" lengthAdjust="spacingAndGlyphs" fill="#3c3c3c" stroke="#3c3c3c" stroke-width="0.800">7.4</text><path d="M865 139.200h3.300v1.700h3v-1.700h7.400v1.700h3v-1.700h3.300v16.700h-20z" fill="#3c3c3c"/><rect x="867.700" y="144.400" width="14.600" height="8.300" fill="#f6f6f6"/><rect x="870.600" y="145.800" width="2.200" height="2.200" rx="0.500" fill="#3c3c3c"/><rect x="874.700" y="145.800" width="2.200" height="2.200" rx="0.500" fill="#3c3c3c"/><rect x="878.800" y="145.800" width="2.200" height="2.200" rx="0.500" fill="#3c3c3c"/><rect x="878.800" y="149.600" width="2.200" height="2.200" rx="0.500" fill="#3c3c3c"/><rect x="895.1" y="131" width="1" height="32.5" fill="#d9d9d9"/><ellipse cx="908.5" cy="145" rx="3.600" ry="7.100" fill="none" stroke="#3c3c3c" stroke-width="2.100"/><ellipse cx="921.1" cy="145" rx="3.600" ry="7.100" fill="none" stroke="#3c3c3c" stroke-width="2.100"/><circle cx="914.8" cy="151.900" r="1.400" fill="#3c3c3c"/><path d="M920.8 148.20000000000002h3.4v3.5h3.5v3.4h-3.5v3.5h-3.4v-3.5h-3.5v-3.4h3.5z" fill="url(#gGreen)" stroke="#4a9018" stroke-width="0.8"/><ellipse cx="941.3000000000001" cy="145" rx="3.600" ry="7.100" fill="none" stroke="#3c3c3c" stroke-width="2.100"/><ellipse cx="953.9000000000001" cy="145" rx="3.600" ry="7.100" fill="none" stroke="#3c3c3c" stroke-width="2.100"/><circle cx="947.6" cy="151.900" r="1.400" fill="#3c3c3c"/><path d="M951.700 150.400l8 7.400M959.700 150.400l-8 7.400" stroke="#8a1010" stroke-width="3.600" stroke-linecap="round"/><path d="M951.700 150.400l8 7.400M959.700 150.400l-8 7.400" stroke="#d42a34" stroke-width="2.300" stroke-linecap="round"/><rect x="969.1" y="131" width="1" height="32.5" fill="#d9d9d9"/><rect x="981.3" y="140.1" width="19.500" height="0.900" fill="#b8b8b8"/><rect x="981.3" y="151.2" width="19.500" height="0.900" fill="#b8b8b8"/><rect x="981.3" y="153.29999999999998" width="19.500" height="0.900" fill="#b8b8b8"/><rect x="991.8" y="138.0" width="2" height="0.900" fill="#b8b8b8"/><rect x="991.8" y="155.2" width="2" height="0.900" fill="#b8b8b8"/><rect x="992.0" y="143" width="8.800" height="2" fill="#2a2a2a"/><rect x="992.0" y="147" width="6.800" height="2" fill="#2a2a2a"/><path d="M979.0999999999999 144.300h5.600v-2.800l5.800 5l-5.800 5v-2.800h-5.600z" fill="url(#gBlue)" stroke="#2a7ccc" stroke-width="0.600"/><rect x="1013.8" y="140.1" width="19.500" height="0.900" fill="#b8b8b8"/><rect x="1013.8" y="151.2" width="19.500" height="0.900" fill="#b8b8b8"/><rect x="1013.8" y="153.29999999999998" width="19.500" height="0.900" fill="#b8b8b8"/><rect x="1024.3" y="138.0" width="2" height="0.900" fill="#b8b8b8"/><rect x="1024.3" y="155.2" width="2" height="0.900" fill="#b8b8b8"/><rect x="1024.5" y="143" width="8.800" height="2" fill="#2a2a2a"/><rect x="1024.5" y="147" width="6.800" height="2" fill="#2a2a2a"/><path d="M1023.0999999999999 144.300h-5.600v-2.800l-5.800 5l5.800 5v-2.800h5.600z" fill="url(#gPurp)" stroke="#9058c8" stroke-width="0.600"/><rect x="1043.0" y="131" width="1" height="32.5" fill="#d9d9d9"/><rect x="1052.500" y="138.500" width="18" height="16" fill="#fbfbfb" stroke="#e07008" stroke-width="3"/><rect x="1052.500" y="138.500" width="18" height="16" fill="none" stroke="#ffb45c" stroke-width="0.900"/><path d="M1061.500 140v13M1054 146.500h15" stroke="#9c9c9c" stroke-width="0.900"/><path d="M1081.2 147h7.2l-3.6 4.1z" fill="#111"/><g transform="translate(1112.4,136.3) rotate(133.34)"><rect x="0" y="-2.1" width="3" height="4.2" rx="0.8" fill="#e884c8" stroke="#b04890" stroke-width="0.5"/><rect x="3" y="-2.1" width="15.00" height="4.2" fill="#2c2c2c"/><rect x="3" y="-0.63" width="15.00" height="1.05" fill="#666"/><path d="M18.00 -2.1L22.00 0L18.00 2.1z" fill="#e8d890" stroke="#8a7a30" stroke-width="0.4"/><path d="M20.70 -0.69L22.00 0L20.70 0.69z" fill="#222"/></g><path d="M1097 153.800c4-2.300 8 1.600 12-0.300c2-0.900 4-1.300 6-0.300" fill="none" stroke="#444" stroke-width="1.100"/><path d="M1097 156c4-1.800 8 1.500 12-0.200c2-0.700 4-0.900 6-0.100" fill="none" stroke="#777" stroke-width="0.900"/><path d="M1097 158.300c4-1.300 8 1.200 12 0" fill="none" stroke="#555" stroke-width="0.900" stroke-dasharray="1.600 1"/><path d="M1125.2 147h7.2l-3.6 4.1z" fill="#111"/><path d="M1140.300 152.800v-15.600h19.800v2.600h-16.800v13z" fill="#4aa8ee" stroke="#2a86dc" stroke-width="0.600"/><g transform="translate(1152.6,146.3) scale(0.66)"><g transform="rotate(-28)"><path d="M-6.800 -6H6.800A3.200 6 0 0 1 6.800 6H-6.800z" fill="url(#gBucket)" stroke="#66666e" stroke-width="0.900"/><ellipse cx="-6.800" cy="0" rx="2.700" ry="6" fill="#5c5c5c" stroke="#66666e" stroke-width="0.900"/></g><path d="M-5.900 -3.200C-6.200 -6 -5.500 -8.300 -3.400 -8.300C-1.400 -8.300 -0.900 -6.500 -0.900 -4.500V-1" fill="none" stroke="#5a5a62" stroke-width="1"/><circle cx="-0.900" cy="0.900" r="1.800" fill="#fafafa" stroke="#5a5a62" stroke-width="0.900"/><path d="M-5.400 9.800c0.300-2 1.400-2.600 1.300-4.200c1.100 1.300 1.600 2.800 1 4.200z" fill="#f07818"/></g><rect x="1137.800" y="152.700" width="24" height="6.200" fill="#2a5fa4"/><path d="M1168.8 147h7.2l-3.6 4.1z" fill="#111"/><rect x="1182.9" y="131" width="1" height="32.5" fill="#d9d9d9"/><rect x="1191.400" y="136.400" width="21.200" height="21" rx="1" fill="#e6e4e2" stroke="#bcbcbc" stroke-width="0.900"/><rect x="1194" y="139.500" width="15.800" height="3.100" rx="1.300" fill="#e04848" stroke="#c42c2c" stroke-width="0.500"/><rect x="1194" y="145.500" width="6.800" height="3.100" rx="1.300" fill="#58b8f0" stroke="#2a90d8" stroke-width="0.500"/><rect x="1194" y="151.500" width="11.800" height="3.100" rx="1.300" fill="#8cd840" stroke="#5cac1c" stroke-width="0.500"/><path d="M1220.8 147h7.2l-3.6 4.1z" fill="#111"/></svg>
<div style="left:12px;top:130px;width:142px;height:32px;background:linear-gradient(to right,#fff 110px,#fbfbfb 110px);border:1px solid #cbc9c7;border-radius:5px;"></div>
<div style="left:122px;top:131px;width:1px;height:32px;background:#cbc9c7;"></div>
<svg style="left:134px;top:144.5px" width="10" height="6" viewBox="0 0 10 6"><path d="M0 0H10L5 5.5Z" fill="#2e2e2e"/></svg>
<div style="left:164px;top:130px;width:83px;height:32px;background:linear-gradient(to right,#fff 51px,#fbfbfb 51px);border:1px solid #cbc9c7;border-radius:5px;"></div>
<div style="left:215px;top:131px;width:1px;height:32px;background:#cbc9c7;"></div>
<svg style="left:227px;top:144.5px" width="10" height="6" viewBox="0 0 10 6"><path d="M0 0H10L5 5.5Z" fill="#2e2e2e"/></svg>
<span class="t" style="left:24.00px;top:137.62px;font-size:15.30px;line-height:18.36px;color:#2e3436;transform:scaleX(1.0032);transform-origin:0 0;font-style:italic;">Calibri</span>
<span class="t" style="left:175.60px;top:138.52px;font-size:14.67px;line-height:17.6px;color:#2e3436;transform:scaleX(0.9528);transform-origin:0 0;">11</span>
<div style="left:0px;top:167px;width:155px;height:32px;background:linear-gradient(to right,#fff 123px,#fbfbfb 123px);border:1px solid #cbc9c7;border-radius:5px;"></div>
<div style="left:123px;top:168px;width:1px;height:32px;background:#cbc9c7;"></div>
<svg style="left:134px;top:182px" width="10" height="6" viewBox="0 0 10 6"><path d="M0 0H10L5 5.5Z" fill="#2e2e2e"/></svg>
<span class="t" style="left:11.00px;top:176.12px;font-size:14.67px;line-height:17.6px;color:#2e3436;transform:scaleX(0.9922);transform-origin:0 0;">A1</span>
<svg style="left:160px;top:168px" width="100" height="32" viewBox="160 168 100 32"><text x="169.600" y="189.600" font-family="Liberation Sans, sans-serif" font-weight="700" font-size="20" textLength="7.800" lengthAdjust="spacingAndGlyphs" fill="#3c3c3c" stroke="#3c3c3c" stroke-width="0.500">f</text><text x="177.200" y="189.800" font-family="Liberation Sans, sans-serif" font-weight="700" font-size="14.500" textLength="9" lengthAdjust="spacingAndGlyphs" fill="#3c3c3c" stroke="#3c3c3c" stroke-width="0.500">x</text><path d="M196 176.200h9.800v2.700h-5.600l3.700 3.900l-3.900 4.200h6v2.700h-10v-2.300l4.300-4.600l-4.300-4.500z" fill="#3c3c3c"/><path d="M215.900 183.100h7.200l-3.600 4.200z" fill="#1a1a1a"/><rect x="234" y="179" width="10" height="2.800" rx="0.600" fill="#4a4a4a"/><rect x="234" y="184.200" width="10" height="2.800" rx="0.600" fill="#4a4a4a"/></svg>
<div style="left:161px;top:171px;width:1px;height:28px;background:#dadada;"></div>
<div style="left:255px;top:171px;width:1px;height:28px;background:#dadada;"></div>
<div style="left:259px;top:172px;width:1031px;height:22px;background:#fff;border:1px solid #b8b8b8;"></div>
<span class="t" style="left:265.00px;top:176.12px;font-size:14.67px;line-height:17.6px;color:#2e3436;transform:scaleX(0.9616);transform-origin:0 0;">ID</span>
<svg style="left:1295.8px;top:180px" width="12" height="7" viewBox="0 0 12 7"><path d="M0 0H11.3L5.65 6Z" fill="#3a3a3a"/></svg>
<div style="left:0px;top:202px;width:1307px;height:20px;background:#f5f5f5;"></div>
<div style="left:0px;top:222px;width:1307px;height:449px;background:#ffffff;"></div>
<div style="left:0px;top:222px;width:40px;height:449px;background:#f5f5f5;"></div>
<div style="left:0px;top:201px;width:1319px;height:1px;background:#adadad;"></div>
<div style="left:0px;top:221px;width:1307px;height:1px;background:#adadad;"></div>
<div style="left:40px;top:202px;width:1px;height:469px;background:#adadad;"></div>
<div style="left:41px;top:202px;width:157px;height:20px;background:#e95420;"></div>
<div style="left:0px;top:222px;width:40px;height:19px;background:#e95420;"></div>
<div style="left:41px;top:222px;width:607px;height:19px;background:#dc4c3a;"></div>
<div style="left:0px;top:240px;width:40px;height:1px;background:#adadad;"></div>
<div style="left:41px;top:240px;width:1266px;height:1px;background:#c0c0c0;"></div>
<div style="left:0px;top:259px;width:40px;height:1px;background:#adadad;"></div>
<div style="left:41px;top:259px;width:1266px;height:1px;background:#c0c0c0;"></div>
<div style="left:0px;top:278px;width:40px;height:1px;background:#adadad;"></div>
<div style="left:41px;top:278px;width:1266px;height:1px;background:#c0c0c0;"></div>
<div style="left:0px;top:297px;width:40px;height:1px;background:#adadad;"></div>
<div style="left:41px;top:297px;width:1266px;height:1px;background:#c0c0c0;"></div>
<div style="left:0px;top:316px;width:40px;height:1px;background:#adadad;"></div>
<div style="left:41px;top:316px;width:1266px;height:1px;background:#c0c0c0;"></div>
<div style="left:0px;top:335px;width:40px;height:1px;background:#adadad;"></div>
<div style="left:41px;top:335px;width:1266px;height:1px;background:#c0c0c0;"></div>
<div style="left:0px;top:354px;width:40px;height:1px;background:#adadad;"></div>
<div style="left:41px;top:354px;width:1266px;height:1px;background:#c0c0c0;"></div>
<div style="left:0px;top:373px;width:40px;height:1px;background:#adadad;"></div>
<div style="left:41px;top:373px;width:1266px;height:1px;background:#c0c0c0;"></div>
<div style="left:0px;top:392px;width:40px;height:1px;background:#adadad;"></div>
<div style="left:41px;top:392px;width:1266px;height:1px;background:#c0c0c0;"></div>
<div style="left:0px;top:411px;width:40px;height:1px;background:#adadad;"></div>
<div style="left:41px;top:411px;width:1266px;height:1px;background:#c0c0c0;"></div>
<div style="left:0px;top:430px;width:40px;height:1px;background:#adadad;"></div>
<div style="left:41px;top:430px;width:1266px;height:1px;background:#c0c0c0;"></div>
<div style="left:0px;top:449px;width:40px;height:1px;background:#adadad;"></div>
<div style="left:41px;top:449px;width:1266px;height:1px;background:#c0c0c0;"></div>
<div style="left:0px;top:468px;width:40px;height:1px;background:#adadad;"></div>
<div style="left:41px;top:468px;width:1266px;height:1px;background:#c0c0c0;"></div>
<div style="left:0px;top:487px;width:40px;height:1px;background:#adadad;"></div>
<div style="left:41px;top:487px;width:1266px;height:1px;background:#c0c0c0;"></div>
<div style="left:0px;top:506px;width:40px;height:1px;background:#adadad;"></div>
<div style="left:41px;top:506px;width:1266px;height:1px;background:#c0c0c0;"></div>
<div style="left:0px;top:525px;width:40px;height:1px;background:#adadad;"></div>
<div style="left:41px;top:525px;width:1266px;height:1px;background:#c0c0c0;"></div>
<div style="left:0px;top:544px;width:40px;height:1px;background:#adadad;"></div>
<div style="left:41px;top:544px;width:1266px;height:1px;background:#c0c0c0;"></div>
<div style="left:0px;top:563px;width:40px;height:1px;background:#adadad;"></div>
<div style="left:41px;top:563px;width:1266px;height:1px;background:#c0c0c0;"></div>
<div style="left:0px;top:582px;width:40px;height:1px;background:#adadad;"></div>
<div style="left:41px;top:582px;width:1266px;height:1px;background:#c0c0c0;"></div>
<div style="left:0px;top:601px;width:40px;height:1px;background:#adadad;"></div>
<div style="left:41px;top:601px;width:1266px;height:1px;background:#c0c0c0;"></div>
<div style="left:0px;top:620px;width:40px;height:1px;background:#adadad;"></div>
<div style="left:41px;top:620px;width:1266px;height:1px;background:#c0c0c0;"></div>
<div style="left:0px;top:639px;width:40px;height:1px;background:#adadad;"></div>
<div style="left:41px;top:639px;width:1266px;height:1px;background:#c0c0c0;"></div>
<div style="left:0px;top:658px;width:40px;height:1px;background:#adadad;"></div>
<div style="left:41px;top:658px;width:1266px;height:1px;background:#c0c0c0;"></div>
<div style="left:197px;top:202px;width:1px;height:20px;background:#adadad;"></div>
<div style="left:197px;top:222px;width:1px;height:449px;background:#c0c0c0;"></div>
<div style="left:359px;top:202px;width:1px;height:20px;background:#adadad;"></div>
<div style="left:359px;top:222px;width:1px;height:449px;background:#c0c0c0;"></div>
<div style="left:647px;top:202px;width:1px;height:20px;background:#adadad;"></div>
<div style="left:647px;top:222px;width:1px;height:449px;background:#c0c0c0;"></div>
<div style="left:724px;top:202px;width:1px;height:20px;background:#adadad;"></div>
<div style="left:724px;top:222px;width:1px;height:449px;background:#c0c0c0;"></div>
<div style="left:801px;top:202px;width:1px;height:20px;background:#adadad;"></div>
<div style="left:801px;top:222px;width:1px;height:449px;background:#c0c0c0;"></div>
<div style="left:878px;top:202px;width:1px;height:20px;background:#adadad;"></div>
<div style="left:878px;top:222px;width:1px;height:449px;background:#c0c0c0;"></div>
<div style="left:955px;top:202px;width:1px;height:20px;background:#adadad;"></div>
<div style="left:955px;top:222px;width:1px;height:449px;background:#c0c0c0;"></div>
<div style="left:1032px;top:202px;width:1px;height:20px;background:#adadad;"></div>
<div style="left:1032px;top:222px;width:1px;height:449px;background:#c0c0c0;"></div>
<div style="left:1109px;top:202px;width:1px;height:20px;background:#adadad;"></div>
<div style="left:1109px;top:222px;width:1px;height:449px;background:#c0c0c0;"></div>
<div style="left:1186px;top:202px;width:1px;height:20px;background:#adadad;"></div>
<div style="left:1186px;top:222px;width:1px;height:449px;background:#c0c0c0;"></div>
<div style="left:1263px;top:202px;width:1px;height:20px;background:#adadad;"></div>
<div style="left:1263px;top:222px;width:1px;height:449px;background:#c0c0c0;"></div>
<div style="left:41px;top:222px;width:607px;height:19px;background:#dc4c3a;"></div>
<span class="t" style="left:114.59px;top:204.13px;font-size:13.60px;line-height:16.32px;color:#ffffff;transform:scaleX(0.9730);transform-origin:50% 0;font-weight:700;">A</span>
<span class="t" style="left:273.96px;top:204.13px;font-size:13.60px;line-height:16.32px;color:#2e3436;transform:scaleX(0.9501);transform-origin:50% 0;">B</span>
<span class="t" style="left:499.59px;top:204.13px;font-size:13.60px;line-height:16.32px;color:#2e3436;transform:scaleX(0.8474);transform-origin:50% 0;">C</span>
<span class="t" style="left:681.09px;top:204.13px;font-size:13.60px;line-height:16.32px;color:#2e3436;transform:scaleX(0.9762);transform-origin:50% 0;">D</span>
<span class="t" style="left:758.46px;top:204.13px;font-size:13.60px;line-height:16.32px;color:#2e3436;transform:scaleX(0.8399);transform-origin:50% 0;">E</span>
<span class="t" style="left:836.84px;top:204.13px;font-size:13.60px;line-height:16.32px;color:#2e3436;transform:scaleX(0.8609);transform-origin:50% 0;">F</span>
<span class="t" style="left:912.71px;top:204.13px;font-size:13.60px;line-height:16.32px;color:#2e3436;transform:scaleX(0.8523);transform-origin:50% 0;">G</span>
<span class="t" style="left:989.59px;top:204.13px;font-size:13.60px;line-height:16.32px;color:#2e3436;transform:scaleX(0.9634);transform-origin:50% 0;">H</span>
<span class="t" style="left:1070.11px;top:204.13px;font-size:13.60px;line-height:16.32px;color:#2e3436;transform:scaleX(0.9215);transform-origin:50% 0;">I</span>
<span class="t" style="left:1145.10px;top:204.13px;font-size:13.60px;line-height:16.32px;color:#2e3436;transform:scaleX(0.9839);transform-origin:50% 0;">J</span>
<span class="t" style="left:1221.46px;top:204.13px;font-size:13.60px;line-height:16.32px;color:#2e3436;transform:scaleX(0.9122);transform-origin:50% 0;">K</span>
<div style="left:1264px;top:202px;width:43px;height:19px;overflow:hidden;background:transparent"><span class="t" style="position:absolute;left:35.5px;top:-0.5px;font-size:13.6px;line-height:19px;color:#2e3436">L</span></div>
<span class="t" style="left:17.02px;top:224.63px;font-size:13.60px;line-height:16.32px;color:#fff;transform:scaleX(1.0145);transform-origin:50% 0;font-weight:700;">1</span>
<span class="t" style="left:17.12px;top:243.63px;font-size:13.60px;line-height:16.32px;color:#2e3436;transform:scaleX(1.0145);transform-origin:50% 0;">2</span>
<span class="t" style="left:17.12px;top:262.63px;font-size:13.60px;line-height:16.32px;color:#2e3436;transform:scaleX(1.0145);transform-origin:50% 0;">3</span>
<span class="t" style="left:17.12px;top:281.63px;font-size:13.60px;line-height:16.32px;color:#2e3436;transform:scaleX(1.0145);transform-origin:50% 0;">4</span>
<span class="t" style="left:17.12px;top:300.63px;font-size:13.60px;line-height:16.32px;color:#2e3436;transform:scaleX(1.0145);transform-origin:50% 0;">5</span>
<span class="t" style="left:17.12px;top:319.63px;font-size:13.60px;line-height:16.32px;color:#2e3436;transform:scaleX(1.0145);transform-origin:50% 0;">6</span>
<span class="t" style="left:17.12px;top:338.63px;font-size:13.60px;line-height:16.32px;color:#2e3436;transform:scaleX(1.0145);transform-origin:50% 0;">7</span>
<span class="t" style="left:17.12px;top:357.63px;font-size:13.60px;line-height:16.32px;color:#2e3436;transform:scaleX(1.0145);transform-origin:50% 0;">8</span>
<span class="t" style="left:17.12px;top:376.63px;font-size:13.60px;line-height:16.32px;color:#2e3436;transform:scaleX(1.0145);transform-origin:50% 0;">9</span>
<span class="t" style="left:13.34px;top:395.63px;font-size:13.60px;line-height:16.32px;color:#2e3436;transform:scaleX(1.0145);transform-origin:50% 0;">10</span>
<span class="t" style="left:13.84px;top:414.63px;font-size:13.60px;line-height:16.32px;color:#2e3436;transform:scaleX(1.0863);transform-origin:50% 0;">11</span>
<span class="t" style="left:13.34px;top:433.63px;font-size:13.60px;line-height:16.32px;color:#2e3436;transform:scaleX(1.0145);transform-origin:50% 0;">12</span>
<span class="t" style="left:13.34px;top:452.63px;font-size:13.60px;line-height:16.32px;color:#2e3436;transform:scaleX(1.0145);transform-origin:50% 0;">13</span>
<span class="t" style="left:13.34px;top:471.63px;font-size:13.60px;line-height:16.32px;color:#2e3436;transform:scaleX(1.0145);transform-origin:50% 0;">14</span>
<span class="t" style="left:13.34px;top:490.63px;font-size:13.60px;line-height:16.32px;color:#2e3436;transform:scaleX(1.0145);transform-origin:50% 0;">15</span>
<span class="t" style="left:13.34px;top:509.63px;font-size:13.60px;line-height:16.32px;color:#2e3436;transform:scaleX(1.0145);transform-origin:50% 0;">16</span>
<span class="t" style="left:13.34px;top:528.63px;font-size:13.60px;line-height:16.32px;color:#2e3436;transform:scaleX(1.0145);transform-origin:50% 0;">17</span>
<span class="t" style="left:13.34px;top:547.63px;font-size:13.60px;line-height:16.32px;color:#2e3436;transform:scaleX(1.0145);transform-origin:50% 0;">18</span>
<span class="t" style="left:13.34px;top:566.63px;font-size:13.60px;line-height:16.32px;color:#2e3436;transform:scaleX(1.0145);transform-origin:50% 0;">19</span>
<span class="t" style="left:13.34px;top:585.63px;font-size:13.60px;line-height:16.32px;color:#2e3436;transform:scaleX(1.0145);transform-origin:50% 0;">20</span>
<span class="t" style="left:13.34px;top:604.63px;font-size:13.60px;line-height:16.32px;color:#2e3436;transform:scaleX(1.0145);transform-origin:50% 0;">21</span>
<span class="t" style="left:13.34px;top:623.63px;font-size:13.60px;line-height:16.32px;color:#2e3436;transform:scaleX(1.0145);transform-origin:50% 0;">22</span>
<span class="t" style="left:13.34px;top:642.63px;font-size:13.60px;line-height:16.32px;color:#2e3436;transform:scaleX(1.0145);transform-origin:50% 0;">23</span>
<span class="t" style="left:13.34px;top:661.63px;font-size:13.60px;line-height:16.32px;color:#2e3436;transform:scaleX(1.0145);transform-origin:50% 0;">24</span>
<span class="t" style="left:42.30px;top:220.77px;font-size:15.88px;line-height:19.06px;color:#000;transform:scaleX(1.0079);transform-origin:0 0;">ID</span>
<span class="t" style="left:361.30px;top:220.77px;font-size:15.88px;line-height:19.06px;color:#000;transform:scaleX(1.0327);transform-origin:0 0;">Email</span>
<span class="t" style="left:186.86px;top:239.77px;font-size:15.88px;line-height:19.06px;color:#000;transform:scaleX(1.1307);transform-origin:100% 0;">1</span>
<span class="t" style="left:361.30px;top:239.77px;font-size:15.88px;line-height:19.06px;color:#000;transform:scaleX(1.0728);transform-origin:0 0;">carri13@nhpc.us</span>
<span class="t" style="left:186.86px;top:258.77px;font-size:15.88px;line-height:19.06px;color:#000;transform:scaleX(1.1307);transform-origin:100% 0;">3</span>
<span class="t" style="left:361.30px;top:258.77px;font-size:15.88px;line-height:19.06px;color:#000;transform:scaleX(1.0789);transform-origin:0 0;">aatmaninfotech1sdsd@gmail.co</span>
<span class="t" style="left:186.86px;top:277.77px;font-size:15.88px;line-height:19.06px;color:#000;transform:scaleX(1.1307);transform-origin:100% 0;">4</span>
<span class="t" style="left:361.30px;top:277.77px;font-size:15.88px;line-height:19.06px;color:#000;transform:scaleX(1.0878);transform-origin:0 0;">fanny.baumbach@example.org</span>
<span class="t" style="left:178.03px;top:296.77px;font-size:15.88px;line-height:19.06px;color:#000;transform:scaleX(1.1317);transform-origin:100% 0;">21</span>
<span class="t" style="left:361.30px;top:296.77px;font-size:15.88px;line-height:19.06px;color:#000;transform:scaleX(1.0686);transform-origin:0 0;">ofelia58@example.org</span>
<span class="t" style="left:178.03px;top:315.77px;font-size:15.88px;line-height:19.06px;color:#000;transform:scaleX(1.1317);transform-origin:100% 0;">22</span>
<span class="t" style="left:361.30px;top:315.77px;font-size:15.88px;line-height:19.06px;color:#000;transform:scaleX(1.0735);transform-origin:0 0;">winona.roob@example.net</span>
<span class="t" style="left:178.03px;top:334.77px;font-size:15.88px;line-height:19.06px;color:#000;transform:scaleX(1.1317);transform-origin:100% 0;">23</span>
<span class="t" style="left:361.30px;top:334.77px;font-size:15.88px;line-height:19.06px;color:#000;transform:scaleX(1.0658);transform-origin:0 0;">kkoch@example.com</span>
<span class="t" style="left:178.03px;top:353.77px;font-size:15.88px;line-height:19.06px;color:#000;transform:scaleX(1.1317);transform-origin:100% 0;">24</span>
<span class="t" style="left:361.30px;top:353.77px;font-size:15.88px;line-height:19.06px;color:#000;transform:scaleX(1.0759);transform-origin:0 0;">ewyman@example.net</span>
<span class="t" style="left:178.03px;top:372.77px;font-size:15.88px;line-height:19.06px;color:#000;transform:scaleX(1.1317);transform-origin:100% 0;">25</span>
<span class="t" style="left:361.30px;top:372.77px;font-size:15.88px;line-height:19.06px;color:#000;transform:scaleX(1.0636);transform-origin:0 0;">erobel@example.org</span>
<span class="t" style="left:178.03px;top:391.77px;font-size:15.88px;line-height:19.06px;color:#000;transform:scaleX(1.1317);transform-origin:100% 0;">26</span>
<span class="t" style="left:361.30px;top:391.77px;font-size:15.88px;line-height:19.06px;color:#000;transform:scaleX(1.0698);transform-origin:0 0;">zwindler@example.org</span>
<span class="t" style="left:178.03px;top:410.77px;font-size:15.88px;line-height:19.06px;color:#000;transform:scaleX(1.1317);transform-origin:100% 0;">27</span>
<span class="t" style="left:361.30px;top:410.77px;font-size:15.88px;line-height:19.06px;color:#000;transform:scaleX(1.0713);transform-origin:0 0;">skye.williamson@example.org</span>
<span class="t" style="left:178.03px;top:429.77px;font-size:15.88px;line-height:19.06px;color:#000;transform:scaleX(1.1317);transform-origin:100% 0;">28</span>
<span class="t" style="left:361.30px;top:429.77px;font-size:15.88px;line-height:19.06px;color:#000;transform:scaleX(1.0808);transform-origin:0 0;">bahringer.eleanore@example.net</span>
<span class="t" style="left:178.03px;top:448.77px;font-size:15.88px;line-height:19.06px;color:#000;transform:scaleX(1.1317);transform-origin:100% 0;">29</span>
<span class="t" style="left:361.30px;top:448.77px;font-size:15.88px;line-height:19.06px;color:#000;transform:scaleX(1.0850);transform-origin:0 0;">hudson59@example.net</span>
<span class="t" style="left:178.03px;top:467.77px;font-size:15.88px;line-height:19.06px;color:#000;transform:scaleX(1.1317);transform-origin:100% 0;">30</span>
<span class="t" style="left:361.30px;top:467.77px;font-size:15.88px;line-height:19.06px;color:#000;transform:scaleX(1.0641);transform-origin:0 0;">hgislason@example.com</span>
<span class="t" style="left:178.03px;top:486.77px;font-size:15.88px;line-height:19.06px;color:#000;transform:scaleX(1.1317);transform-origin:100% 0;">31</span>
<span class="t" style="left:361.30px;top:486.77px;font-size:15.88px;line-height:19.06px;color:#000;transform:scaleX(1.0834);transform-origin:0 0;">wbergstrom@example.net</span>
<span class="t" style="left:178.03px;top:505.77px;font-size:15.88px;line-height:19.06px;color:#000;transform:scaleX(1.1317);transform-origin:100% 0;">32</span>
<span class="t" style="left:361.30px;top:505.77px;font-size:15.88px;line-height:19.06px;color:#000;transform:scaleX(1.0810);transform-origin:0 0;">angie98@example.net</span>
<span class="t" style="left:178.03px;top:524.77px;font-size:15.88px;line-height:19.06px;color:#000;transform:scaleX(1.1317);transform-origin:100% 0;">33</span>
<span class="t" style="left:361.30px;top:524.77px;font-size:15.88px;line-height:19.06px;color:#000;transform:scaleX(1.0760);transform-origin:0 0;">rempel.columbus@example.com</span>
<span class="t" style="left:178.03px;top:543.77px;font-size:15.88px;line-height:19.06px;color:#000;transform:scaleX(1.1317);transform-origin:100% 0;">34</span>
<span class="t" style="left:361.30px;top:543.77px;font-size:15.88px;line-height:19.06px;color:#000;transform:scaleX(1.0656);transform-origin:0 0;">ostrosin@example.com</span>
<span class="t" style="left:178.03px;top:562.77px;font-size:15.88px;line-height:19.06px;color:#000;transform:scaleX(1.1317);transform-origin:100% 0;">35</span>
<span class="t" style="left:361.30px;top:562.77px;font-size:15.88px;line-height:19.06px;color:#000;transform:scaleX(1.0695);transform-origin:0 0;">adams.hailie@example.org</span>
<span class="t" style="left:178.03px;top:581.77px;font-size:15.88px;line-height:19.06px;color:#000;transform:scaleX(1.1317);transform-origin:100% 0;">36</span>
<span class="t" style="left:361.30px;top:581.77px;font-size:15.88px;line-height:19.06px;color:#000;transform:scaleX(1.0645);transform-origin:0 0;">cale.mcclure@example.org</span>
<span class="t" style="left:178.03px;top:600.77px;font-size:15.88px;line-height:19.06px;color:#000;transform:scaleX(1.1317);transform-origin:100% 0;">37</span>
<span class="t" style="left:361.30px;top:600.77px;font-size:15.88px;line-height:19.06px;color:#000;transform:scaleX(1.0836);transform-origin:0 0;">kirlin.sydnie@example.org</span>
<span class="t" style="left:178.03px;top:619.77px;font-size:15.88px;line-height:19.06px;color:#000;transform:scaleX(1.1317);transform-origin:100% 0;">38</span>
<span class="t" style="left:361.30px;top:619.77px;font-size:15.88px;line-height:19.06px;color:#000;transform:scaleX(1.0963);transform-origin:0 0;">danny.mann@example.net</span>
<span class="t" style="left:178.03px;top:638.77px;font-size:15.88px;line-height:19.06px;color:#000;transform:scaleX(1.1317);transform-origin:100% 0;">39</span>
<span class="t" style="left:361.30px;top:638.77px;font-size:15.88px;line-height:19.06px;color:#000;transform:scaleX(1.0831);transform-origin:0 0;">lubowitz.shannon@example.net</span>
<span class="t" style="left:178.03px;top:657.77px;font-size:15.88px;line-height:19.06px;color:#000;transform:scaleX(1.1317);transform-origin:100% 0;">40</span>
<span class="t" style="left:361.30px;top:657.77px;font-size:15.88px;line-height:19.06px;color:#000;transform:scaleX(1.0764);transform-origin:0 0;">hortense.feeney@example.net</span>
<div style="left:198px;top:222px;width:160px;height:449px;overflow:hidden">
<span class="t" style="left:1.30px;top:-1.23px;font-size:15.88px;line-height:19.06px;color:#000;transform:scaleX(1.0387);transform-origin:0 0;">Name</span>
<span class="t" style="left:1.30px;top:17.77px;font-size:15.88px;line-height:19.06px;color:#000;transform:scaleX(1.0681);transform-origin:0 0;">Hardik</span>
<span class="t" style="left:1.30px;top:36.77px;font-size:15.88px;line-height:19.06px;color:#000;transform:scaleX(0.9502);transform-origin:0 0;">HARDIK</span>
<span class="t" style="left:1.30px;top:55.77px;font-size:15.88px;line-height:19.06px;color:#000;transform:scaleX(1.1098);transform-origin:0 0;">hardik</span>
<span class="t" style="left:1.30px;top:74.77px;font-size:15.88px;line-height:19.06px;color:#000;transform:scaleX(1.0847);transform-origin:0 0;">Mortimer Wilderman</span>
<span class="t" style="left:1.30px;top:93.77px;font-size:15.88px;line-height:19.06px;color:#000;transform:scaleX(1.0432);transform-origin:0 0;">Prof. Faye Douglas I</span>
<span class="t" style="left:1.30px;top:112.77px;font-size:15.88px;line-height:19.06px;color:#000;transform:scaleX(1.0445);transform-origin:0 0;">Rowland Rippin PhD</span>
<span class="t" style="left:1.30px;top:131.77px;font-size:15.88px;line-height:19.06px;color:#000;transform:scaleX(1.0413);transform-origin:0 0;">Kareem Haag</span>
<span class="t" style="left:1.30px;top:150.77px;font-size:15.88px;line-height:19.06px;color:#000;transform:scaleX(1.0564);transform-origin:0 0;">Dr. Roselyn Deckow</span>
<span class="t" style="left:1.30px;top:169.77px;font-size:15.88px;line-height:19.06px;color:#000;transform:scaleX(1.0330);transform-origin:0 0;">Rowan Lemke DDS</span>
<span class="t" style="left:1.30px;top:188.77px;font-size:15.88px;line-height:19.06px;color:#000;transform:scaleX(1.0466);transform-origin:0 0;">Casimir Cormier</span>
<span class="t" style="left:1.30px;top:207.77px;font-size:15.88px;line-height:19.06px;color:#000;transform:scaleX(1.0767);transform-origin:0 0;">Wilson Satterfield</span>
<span class="t" style="left:1.30px;top:226.77px;font-size:15.88px;line-height:19.06px;color:#000;transform:scaleX(1.0031);transform-origin:0 0;">Dena Jones</span>
<span class="t" style="left:1.30px;top:245.77px;font-size:15.88px;line-height:19.06px;color:#000;transform:scaleX(1.0652);transform-origin:0 0;">Geovanny Gaylord</span>
<span class="t" style="left:1.30px;top:264.77px;font-size:15.88px;line-height:19.06px;color:#000;transform:scaleX(1.0720);transform-origin:0 0;">Manley Rutherford</span>
<span class="t" style="left:1.30px;top:283.77px;font-size:15.88px;line-height:19.06px;color:#000;transform:scaleX(1.0633);transform-origin:0 0;">Xander Gulgowski</span>
<span class="t" style="left:1.30px;top:302.77px;font-size:15.88px;line-height:19.06px;color:#000;transform:scaleX(1.0694);transform-origin:0 0;">Hillary Zboncak</span>
<span class="t" style="left:1.30px;top:321.77px;font-size:15.88px;line-height:19.06px;color:#000;transform:scaleX(1.0766);transform-origin:0 0;">Neva Vandervort</span>
<span class="t" style="left:1.30px;top:340.77px;font-size:15.88px;line-height:19.06px;color:#000;transform:scaleX(1.0507);transform-origin:0 0;">Olga Emard</span>
<span class="t" style="left:1.30px;top:359.77px;font-size:15.88px;line-height:19.06px;color:#000;transform:scaleX(1.0522);transform-origin:0 0;">Otha Klocko</span>
<span class="t" style="left:1.30px;top:378.77px;font-size:15.88px;line-height:19.06px;color:#000;transform:scaleX(1.0400);transform-origin:0 0;">Prof. Oswaldo Toy DVM</span>
<span class="t" style="left:1.30px;top:397.77px;font-size:15.88px;line-height:19.06px;color:#000;transform:scaleX(1.0451);transform-origin:0 0;">Kelsie King</span>
<span class="t" style="left:1.30px;top:416.77px;font-size:15.88px;line-height:19.06px;color:#000;transform:scaleX(1.0736);transform-origin:0 0;">Dr. Isidro Feil Sr.</span>
<span class="t" style="left:1.30px;top:435.77px;font-size:15.88px;line-height:19.06px;color:#000;transform:scaleX(1.0646);transform-origin:0 0;">Alexie Grant</span>
</div>
<svg style="left:355px;top:303.5px" width="4" height="6" viewBox="0 0 4 6"><path d="M0 0L3.5 3L0 6Z" fill="#7a1a10"/></svg>
<svg style="left:355px;top:607.5px" width="4" height="6" viewBox="0 0 4 6"><path d="M0 0L3.5 3L0 6Z" fill="#7a1a10"/></svg>
<div style="left:0px;top:671px;width:1366px;height:97px;background:#f7f7f7;"></div>
<div style="left:41px;top:222px;width:157px;height:1px;background:#000;"></div>
<div style="left:41px;top:222px;width:1px;height:19px;background:#000;"></div>
<div style="left:41px;top:239px;width:157px;height:2px;background:#000;"></div>
<div style="left:196px;top:222px;width:2px;height:19px;background:#000;"></div>
<div style="left:195px;top:238px;width:5px;height:5px;background:#000;"></div>
<div style="left:1307px;top:202px;width:12px;height:469px;background:#d3d3d3;"></div>
<div style="left:1307px;top:202px;width:12px;height:5px;background:#bdbdbd;"></div>
<div style="left:1310px;top:203.5px;width:6px;height:1.5px;background:#222;"></div>
<div style="left:1310px;top:212px;width:6px;height:77px;background:#8a8a8a;border-radius:3px"></div>
<div style="left:0px;top:671px;width:1307px;height:12px;background:#d3d3d3;"></div>
<div style="left:4px;top:673.8px;width:590px;height:6.4px;background:#888;border-radius:3.2px"></div>
<div style="left:1303px;top:675px;width:2px;height:5px;background:#333;"></div>
<div style="left:1319px;top:167px;width:47px;height:540px;background:#f7f7f7;"></div>
<div style="left:1319px;top:167px;width:47px;height:1px;background:#ababab;"></div>
<div style="left:1319px;top:167px;width:1px;height:540px;background:#ababab;"></div>
<div style="left:1325px;top:167px;width:1px;height:540px;background:#ababab;"></div>
<div style="left:1319px;top:706px;width:47px;height:1px;background:#ababab;"></div>
<div style="left:1320px;top:401px;width:5px;height:73px;background:#a8a8a8;"></div>
<svg style="left:1320px;top:433px" width="5" height="8" viewBox="0 0 5 8"><path d="M0.5 0.5L4.5 4L0.5 7.5Z" fill="#fff"/></svg>
<div style="left:1336px;top:206px;width:20px;height:1px;background:#dcdcdc;"></div>
<div style="left:1330px;top:315px;width:31px;height:31px;border:1px solid #cfcfcf;border-radius:4px;background:#f8f8f8"></div>
<div style="left:143px;top:683px;width:87px;height:22px;background:#ffffff;"></div>
<div style="left:143px;top:705px;width:87px;height:3px;background:#9a9a9a;"></div>
<span class="t" style="left:156.00px;top:687.28px;font-size:13.33px;line-height:16.0px;color:#2e3436;transform:scaleX(0.9453);transform-origin:0 0;">Worksheet</span>
<svg style="left:12px;top:686px" width="90" height="18" viewBox="0 0 90 18"><g fill="#b4b4b4">
<rect x="1.5" y="1.5" width="1.6" height="15"/><path d="M11.5 1.5V16.5L3.5 9Z"/>
<path d="M35.5 1.5V16.5L26.8 9Z"/>
<path d="M51.7 1.5V16.5L59.6 9Z"/>
<path d="M75.8 1.5V16.5L83.8 9Z"/><rect x="84.4" y="1.5" width="1.6" height="15"/></g></svg>
<div style="left:116px;top:694.3px;width:17px;height:2.6px;background:#2e2e2e;"></div>
<div style="left:123.2px;top:687px;width:2.6px;height:17px;background:#2e2e2e;"></div>
<div style="left:45px;top:710px;width:248px;height:32px;background:linear-gradient(to right,#fff 216px,#fbfbfb 216px);border:1px solid #cbc9c7;border-radius:5px;"></div>
<div style="left:261px;top:711px;width:1px;height:32px;background:#cbc9c7;"></div>
<svg style="left:273.3px;top:724.5px" width="10" height="6" viewBox="0 0 10 6"><path d="M0 0H10L5 5.5Z" fill="#2e2e2e"/></svg>
<span class="t" style="left:56.40px;top:717.92px;font-size:15.30px;line-height:18.36px;color:#929292;transform:scaleX(0.9743);transform-origin:0 0;">Find</span>
<span class="t" style="left:364.50px;top:719.28px;font-size:13.33px;line-height:16.0px;color:#9a9a9a;transform:scaleX(0.9035);transform-origin:0 0;">Find All</span>
<div style="left:415px;top:719px;width:14px;height:14px;background:#fff;border:1px solid #c3c3c3;border-radius:3px"></div>
<div style="left:570px;top:719px;width:14px;height:14px;background:#fff;border:1px solid #c3c3c3;border-radius:3px"></div>
<span class="t" style="left:438.60px;top:718.11px;font-size:15.20px;line-height:18.24px;color:#2e2e2e;transform:scaleX(1.0192);transform-origin:0 0;">Formatted Display</span>
<span class="t" style="left:593.50px;top:718.11px;font-size:15.20px;line-height:18.24px;color:#2e2e2e;transform:scaleX(0.9562);transform-origin:0 0;">Match Case</span>
<div style="left:678px;top:712px;width:1px;height:32px;background:#dadada;"></div>
<div style="left:719px;top:712px;width:1px;height:32px;background:#dadada;"></div>
<svg style="left:17px;top:715px" width="24" height="24" viewBox="0 0 24 24"><defs><linearGradient id="rc" x1="0" y1="0" x2="0" y2="1"><stop offset="0" stop-color="#ef4a4a"/><stop offset="1" stop-color="#c01c1c"/></linearGradient></defs>
<circle cx="12" cy="12" r="10.7" fill="url(#rc)" stroke="#a81616" stroke-width="0.8"/><path d="M8.3 8.3L15.7 15.7M15.7 8.3L8.3 15.7" stroke="#fff" stroke-width="2.3" stroke-linecap="round"/></svg>
<svg style="left:303px;top:719px" width="52" height="17" viewBox="0 0 52 17"><g fill="#b8b8b8">
<path d="M9 1L17 9.2L14.8 11.2L10.9 7.4V15.5H7.1V7.4L3.2 11.2L1 9.2Z"/>
<path d="M42 15.8L50 7.6L47.8 5.6L43.9 9.4V1.3H40.1V9.4L36.2 5.6L34 7.6Z"/></g></svg>
<div style="left:0px;top:747px;width:1366px;height:1px;background:#c8c8c8;"></div>
<span class="t" style="left:10.00px;top:750.78px;font-size:13.33px;line-height:16.0px;color:#2e2e2e;transform:scaleX(0.9097);transform-origin:0 0;">Sheet 1 of 1</span>
<span class="t" style="left:372.00px;top:750.78px;font-size:13.33px;line-height:16.0px;color:#2e2e2e;transform:scaleX(0.9063);transform-origin:0 0;">PageStyle_Worksheet</span>
<span class="t" style="left:668.50px;top:750.78px;font-size:13.33px;line-height:16.0px;color:#2e2e2e;transform:scaleX(0.8767);transform-origin:0 0;">English (India)</span>
<span class="t" style="left:1021.00px;top:750.78px;font-size:13.33px;line-height:16.0px;color:#2e2e2e;transform:scaleX(0.8813);transform-origin:0 0;">Average: ; Sum: 0</span>
<span class="t" style="left:1325.90px;top:750.78px;font-size:13.33px;line-height:16.0px;color:#2e2e2e;transform:scaleX(0.8829);transform-origin:0 0;">100%</span>
<div style="left:182px;top:751px;width:1px;height:14px;background:#d6d6d6;"></div>
<div style="left:363px;top:751px;width:1px;height:14px;background:#d6d6d6;"></div>
<div style="left:605px;top:751px;width:1px;height:14px;background:#d6d6d6;"></div>
<div style="left:803px;top:751px;width:1px;height:14px;background:#d6d6d6;"></div>
<div style="left:871px;top:751px;width:1px;height:14px;background:#d6d6d6;"></div>
<div style="left:900px;top:751px;width:1px;height:14px;background:#d6d6d6;"></div>
<div style="left:929px;top:751px;width:1px;height:14px;background:#d6d6d6;"></div>
<div style="left:958px;top:751px;width:1px;height:14px;background:#d6d6d6;"></div>
<div style="left:1174px;top:751px;width:1px;height:14px;background:#d6d6d6;"></div>
<div style="left:1317px;top:751px;width:1px;height:14px;background:#d6d6d6;"></div>
<div style="left:1184px;top:759px;width:9px;height:1px;background:#555;"></div>
<div style="left:1199px;top:759px;width:97px;height:1px;background:#777;"></div>
<div style="left:1301px;top:759px;width:9px;height:1px;background:#555;"></div>
<div style="left:1305px;top:755px;width:1px;height:9px;background:#555;"></div>
<div style="left:1241.5px;top:754px;width:9px;height:9px;border:1px solid #777;border-radius:50%;background:#f4f4f4"></div>
<div style="left:3px;top:96px;width:3px;height:23px;background:repeating-linear-gradient(#bababa 0 3px,transparent 3px 4px)"></div>
<div style="left:3px;top:136px;width:3px;height:23px;background:repeating-linear-gradient(#bababa 0 3px,transparent 3px 4px)"></div>
<div style="left:3px;top:715px;width:3px;height:23px;background:repeating-linear-gradient(#bababa 0 3px,transparent 3px 4px)"></div>
<svg style="left:0;top:0" width="1366" height="64" viewBox="0 0 1366 64"><path d="M111.500 6.500h8.600l2.700 2.700v10.400h-11.300z" fill="#f4f4f4"/><path d="M120.100 6.500l2.700 2.700h-2.700z" fill="#bdbdbd"/><rect x="113.300" y="10.600" width="7.800" height="6.800" fill="none" stroke="#2a2a2a" stroke-width="1"/><path d="M113.300 12.900h7.800M113.300 15.100h7.800M115.900 10.600v6.800M118.500 10.600v6.800" stroke="#2a2a2a" stroke-width="0.900"/><path d="M243.200 11h9.600l-4.800 4.900z" fill="#f2f2f2"/><circle cx="1176.500" cy="13" r="2.100" fill="#f2f2f2"/><circle cx="1182" cy="13" r="2.100" fill="#f2f2f2"/><circle cx="1187.500" cy="13" r="2.100" fill="#f2f2f2"/><g transform="translate(1222.200,13)"><circle r="7.500" fill="#db4437"/><path d="M0 0L-6.500 -3.750A7.500 7.500 0 0 0 -0.600 7.480L3.250 1.300z" fill="#0f9d58"/><path d="M0 0L-0.600 7.480A7.500 7.500 0 0 0 6.500 -3.750L0 -3.750z" fill="#ffcd40"/><path d="M0 -3.750H6.500A7.500 7.500 0 0 0 -6.500 -3.750z" fill="#db4437"/><circle r="3.500" fill="#f1f1f1"/><circle r="2.700" fill="#4285f4"/></g><g fill="#f2f2f2"><rect x="1263.500" y="6" width="6.200" height="4.200" rx="0.500"/><rect x="1259.200" y="14.800" width="5.600" height="4.200" rx="0.500"/><rect x="1268.600" y="14.800" width="5.600" height="4.200" rx="0.500"/><path d="M1266 10h1.200v2h5v3h-1.200v-1.800h-8.800v1.800h-1.200v-3h5z"/></g><path d="M1288 10.200h3l4.200-4.200v14l-4.200-4.200h-3z" fill="#f2f2f2"/><path d="M1297.300 9.300a4.600 4.600 0 0 1 0 7.400M1299.600 6.600a8.300 8.300 0 0 1 0 12.800" fill="none" stroke="#f2f2f2" stroke-width="1.300"/><path d="M1301 5.500a10 10 0 0 1 0 15" fill="none" stroke="#8a8a8a" stroke-width="1.100"/><path d="M1318.200 7.800a6 6 0 1 0 8.200 0" fill="none" stroke="#f2f2f2" stroke-width="1.300" stroke-linecap="round"/><path d="M1322.300 5.800v6.600" stroke="#f2f2f2" stroke-width="1.300" stroke-linecap="round"/><path d="M1341.200 11h9.600l-4.800 4.900z" fill="#f2f2f2"/><rect x="1276" y="46.800" width="8" height="1.100" fill="#f0f0f0"/><path d="M1311.500 41.700h6.300v6.300" fill="none" stroke="#c8c8c8" stroke-width="1"/><rect x="1309.800" y="43.400" width="6" height="6" fill="none" stroke="#f0f0f0" stroke-width="1.100"/><circle cx="1348" cy="45" r="9.100" fill="#e95420"/><path d="M1344.500 41.500l7 7M1351.500 41.500l-7 7" stroke="#fff" stroke-width="1.400"/></svg><svg style="left:1340px;top:68px" width="16" height="16" viewBox="1340 68 16 16"><path d="M1344 72.200l7.800 7.800M1351.800 72.200l-7.800 7.800" stroke="#2e2e2e" stroke-width="1.300"/></svg><svg style="left:1326px;top:168px" width="40" height="220" viewBox="1326 168 40 220"><defs>
<linearGradient id="sGreen" x1="0" y1="0" x2="0" y2="1"><stop offset="0" stop-color="#a6e65a"/><stop offset="1" stop-color="#66b826"/></linearGradient>
<linearGradient id="sDoc" x1="0" y1="0" x2="0" y2="1"><stop offset="0" stop-color="#a2cf88"/><stop offset="1" stop-color="#4a8232"/></linearGradient>
<linearGradient id="sFold" x1="0" y1="0" x2="0" y2="1"><stop offset="0" stop-color="#f7dcb0"/><stop offset="1" stop-color="#ecc58c"/></linearGradient>
<linearGradient id="sGrey" x1="0" y1="0" x2="0" y2="1"><stop offset="0" stop-color="#f2f2f2"/><stop offset="1" stop-color="#d6d6d6"/></linearGradient>
<linearGradient id="sPdf" x1="0" y1="0" x2="0.300" y2="1"><stop offset="0" stop-color="#f0806c"/><stop offset="0.600" stop-color="#e05a58"/><stop offset="1" stop-color="#c43a4c"/></linearGradient>
<linearGradient id="sPrn" x1="0" y1="0" x2="0" y2="1"><stop offset="0" stop-color="#555"/><stop offset="1" stop-color="#222"/></linearGradient>
<linearGradient id="sUndo" x1="0" y1="0" x2="0" y2="1"><stop offset="0" stop-color="#fbd65a"/><stop offset="1" stop-color="#e8a020"/></linearGradient>
<linearGradient id="sBub" x1="0" y1="0" x2="0" y2="1"><stop offset="0" stop-color="#fde27a"/><stop offset="1" stop-color="#f0a828"/></linearGradient>
<linearGradient id="sSky" x1="0" y1="0" x2="0" y2="1"><stop offset="0" stop-color="#2a98e6"/><stop offset="1" stop-color="#a8daf6"/></linearGradient>
<linearGradient id="sPurp" x1="0" y1="0" x2="0" y2="1"><stop offset="0" stop-color="#c79cf0"/><stop offset="1" stop-color="#9a5fd0"/></linearGradient>
<linearGradient id="sBlue" x1="0" y1="0" x2="0" y2="1"><stop offset="0" stop-color="#6cc2f4"/><stop offset="1" stop-color="#2a86dc"/></linearGradient>
<linearGradient id="sSalm" x1="0" y1="0" x2="0" y2="1"><stop offset="0" stop-color="#f4a890"/><stop offset="1" stop-color="#e07860"/></linearGradient>
<linearGradient id="sGold" x1="0" y1="0" x2="1" y2="0"><stop offset="0" stop-color="#d8a820"/><stop offset="0.5" stop-color="#fff0a0"/><stop offset="1" stop-color="#c89818"/></linearGradient>
<linearGradient id="sPink" x1="0" y1="0" x2="0" y2="1"><stop offset="0" stop-color="#fbb4cf"/><stop offset="1" stop-color="#f07aa8"/></linearGradient>
<linearGradient id="sBucket" x1="0" y1="0" x2="0" y2="1"><stop offset="0" stop-color="#c4c4c8"/><stop offset="0.350" stop-color="#fbfbfb"/><stop offset="1" stop-color="#b4b4b8"/></linearGradient>
</defs><path d="M1354.02 184.62L1356.61 184.74L1356.61 188.86L1354.02 188.98L1353.15 191.07L1354.90 192.98L1351.98 195.90L1350.07 194.15L1347.98 195.02L1347.86 197.61L1343.74 197.61L1343.62 195.02L1341.53 194.15L1339.62 195.90L1336.70 192.98L1338.45 191.07L1337.58 188.98L1334.99 188.86L1334.99 184.74L1337.58 184.62L1338.45 182.53L1336.70 180.62L1339.62 177.70L1341.53 179.45L1343.62 178.58L1343.74 175.99L1347.86 175.99L1347.98 178.58L1350.07 179.45L1351.98 177.70L1354.90 180.62L1353.15 182.53Z" fill="#dcdcdc" stroke="#9a9a9a" stroke-width="1.100" stroke-linejoin="round"/><circle cx="1345.800" cy="186.800" r="5.600" fill="#ececec" stroke="#a8a8a8" stroke-width="0.900"/><circle cx="1345.800" cy="186.800" r="3.200" fill="#f8f8f8" stroke="#9a9a9a" stroke-width="1.100"/><rect x="1336.300" y="216.400" width="19.400" height="19.400" fill="#e6e6e6" stroke="#b4b4b4" stroke-width="0.900"/><rect x="1336.800" y="232.500" width="18.400" height="2.800" fill="#d2d2d2"/><rect x="1338.800" y="222.300" width="14.600" height="6.600" rx="3.300" fill="#3a8ee6" stroke="#2a70c4" stroke-width="0.600"/><circle cx="1350" cy="225.600" r="2.500" fill="#fff"/><path d="M1334.500 267.200l6.800-17.400h3.800l6.800 17.400h-3.800l-1.400-3.800h-7l-1.400 3.800zm6.300-6.800h4.800l-2.400-6.800z" fill="#444"/><path d="M1358.600 255.300l-8.800 8.800l2.100 2.100z" fill="#b86a2c" stroke="#8a4a1c" stroke-width="0.600"/><path d="M1349.800 264.100l2.100 2.100l-1.900 1.900l-2.100-2.100z" fill="#c4c4c4" stroke="#8a8a8a" stroke-width="0.400"/><path d="M1350 268.100l-2.100-2.100c-2 0.400-2.300 2.600-4.500 4.700c3.300 0.700 6.200-0.500 6.600-2.600z" fill="#e458c0"/><g transform="rotate(-7 1345 296)"><rect x="1335" y="287" width="20" height="16" fill="#fafafa" stroke="#9a9a9a" stroke-width="0.800"/><rect x="1336.5" y="288.5" width="17" height="13" fill="url(#sSky)"/><path d="M1336.5 295.96c4.00 -1.500 7.00 0.500 10.00 0.300s5.00 -1.500 7.00 -0.600V301.5H1336.5z" fill="#f2a62c"/><circle cx="1341.60" cy="298.84" r="1.300" fill="#e8341c"/></g><rect x="1336.5" y="289.5" width="20.5" height="16.5" fill="#fafafa" stroke="#9a9a9a" stroke-width="0.800"/><rect x="1338.0" y="291.0" width="17.5" height="13.5" fill="url(#sSky)"/><path d="M1338.0 298.74c4.10 -1.500 7.17 0.500 10.25 0.300s5.12 -1.500 7.25 -0.600V304.5H1338.0z" fill="#f2a62c"/><circle cx="1343.27" cy="301.71" r="1.300" fill="#e8341c"/><rect x="1330.500" y="315.500" width="31" height="30.700" rx="3.500" fill="#f8f8f8" stroke="#cdcdcd" stroke-width="1"/><circle cx="1346" cy="331" r="10" fill="#2c3e5c" stroke="#888" stroke-width="2.600"/><circle cx="1346" cy="331" r="11.300" fill="none" stroke="#5a5a5a" stroke-width="0.600"/><path d="M1346 331l4.300-6.800l-2.300 7.600z" fill="#e83030"/><path d="M1346 331l-4.300 6.800l2.300-7.600z" fill="#f4f4f4"/><path d="M1346 331l-6-2.800l6.800 0.800z" fill="#e83030"/><path d="M1346 331l6 2.800l-6.800-0.800z" fill="#e0e0e0"/><circle cx="1346" cy="331" r="1.300" fill="#fff"/><text x="1337.500" y="375.300" font-family="Liberation Sans, sans-serif" font-weight="400" font-size="24" textLength="8" lengthAdjust="spacingAndGlyphs" fill="#3c3c3c" stroke="#3c3c3c" stroke-width="0.350">f</text><text x="1346" y="376.800" font-family="Liberation Sans, sans-serif" font-weight="400" font-size="11" textLength="11.500" lengthAdjust="spacingAndGlyphs" fill="#3c3c3c" stroke="#3c3c3c" stroke-width="0.300">(x)</text></svg><svg style="left:680px;top:710px" width="320" height="58" viewBox="680 710 320 58"><defs>
<linearGradient id="fGreen" x1="0" y1="0" x2="0" y2="1"><stop offset="0" stop-color="#a6e65a"/><stop offset="1" stop-color="#66b826"/></linearGradient>
<linearGradient id="fDoc" x1="0" y1="0" x2="0" y2="1"><stop offset="0" stop-color="#a2cf88"/><stop offset="1" stop-color="#4a8232"/></linearGradient>
<linearGradient id="fFold" x1="0" y1="0" x2="0" y2="1"><stop offset="0" stop-color="#f7dcb0"/><stop offset="1" stop-color="#ecc58c"/></linearGradient>
<linearGradient id="fGrey" x1="0" y1="0" x2="0" y2="1"><stop offset="0" stop-color="#f2f2f2"/><stop offset="1" stop-color="#d6d6d6"/></linearGradient>
<linearGradient id="fPdf" x1="0" y1="0" x2="0.300" y2="1"><stop offset="0" stop-color="#f0806c"/><stop offset="0.600" stop-color="#e05a58"/><stop offset="1" stop-color="#c43a4c"/></linearGradient>
<linearGradient id="fPrn" x1="0" y1="0" x2="0" y2="1"><stop offset="0" stop-color="#555"/><stop offset="1" stop-color="#222"/></linearGradient>
<linearGradient id="fUndo" x1="0" y1="0" x2="0" y2="1"><stop offset="0" stop-color="#fbd65a"/><stop offset="1" stop-color="#e8a020"/></linearGradient>
<linearGradient id="fBub" x1="0" y1="0" x2="0" y2="1"><stop offset="0" stop-color="#fde27a"/><stop offset="1" stop-color="#f0a828"/></linearGradient>
<linearGradient id="fSky" x1="0" y1="0" x2="0" y2="1"><stop offset="0" stop-color="#2a98e6"/><stop offset="1" stop-color="#a8daf6"/></linearGradient>
<linearGradient id="fPurp" x1="0" y1="0" x2="0" y2="1"><stop offset="0" stop-color="#c79cf0"/><stop offset="1" stop-color="#9a5fd0"/></linearGradient>
<linearGradient id="fBlue" x1="0" y1="0" x2="0" y2="1"><stop offset="0" stop-color="#6cc2f4"/><stop offset="1" stop-color="#2a86dc"/></linearGradient>
<linearGradient id="fSalm" x1="0" y1="0" x2="0" y2="1"><stop offset="0" stop-color="#f4a890"/><stop offset="1" stop-color="#e07860"/></linearGradient>
<linearGradient id="fGold" x1="0" y1="0" x2="1" y2="0"><stop offset="0" stop-color="#d8a820"/><stop offset="0.5" stop-color="#fff0a0"/><stop offset="1" stop-color="#c89818"/></linearGradient>
<linearGradient id="fPink" x1="0" y1="0" x2="0" y2="1"><stop offset="0" stop-color="#fbb4cf"/><stop offset="1" stop-color="#f07aa8"/></linearGradient>
<linearGradient id="fBucket" x1="0" y1="0" x2="0" y2="1"><stop offset="0" stop-color="#c4c4c8"/><stop offset="0.350" stop-color="#fbfbfb"/><stop offset="1" stop-color="#b4b4b8"/></linearGradient>
</defs><g transform="translate(688.6,716.6)"><ellipse cx="9" cy="21.300" rx="8" ry="1.300" fill="#000" opacity="0.100"/><circle cx="7.300" cy="6.500" r="5.900" fill="#fdfdfd" fill-opacity="0.600" stroke="#333" stroke-width="1.400"/><path d="M11.600 11l8.200 8.600" stroke="#333" stroke-width="2.500" stroke-linecap="round"/><g transform="translate(21.3,7.3) rotate(134.21)"><rect x="0" y="-2.3" width="3" height="4.6" rx="0.8" fill="#e884c8" stroke="#b04890" stroke-width="0.5"/><rect x="3" y="-2.3" width="13.51" height="4.6" fill="#2c2c2c"/><rect x="3" y="-0.69" width="13.51" height="1.15" fill="#666"/><path d="M16.51 -2.3L20.51 0L16.51 2.3z" fill="#e8d890" stroke="#8a7a30" stroke-width="0.4"/><path d="M19.21 -0.76L20.51 0L19.21 0.76z" fill="#222"/></g></g><path d="M880 754.500h3.600M880 763.500h3.600M881.800 754.500v9M887.500 763.500h6" stroke="#666" stroke-width="0.900" fill="none"/><rect x="909.300" y="753.800" width="12" height="9.400" fill="#f0f0f0" stroke="#9a9a9a" stroke-width="0.900"/><path d="M913.800 755h3v3h2.200l-3.700 4l-3.700-4h2.200z" fill="#f08020" stroke="#d05c00" stroke-width="0.600"/></svg>
</body></html>
